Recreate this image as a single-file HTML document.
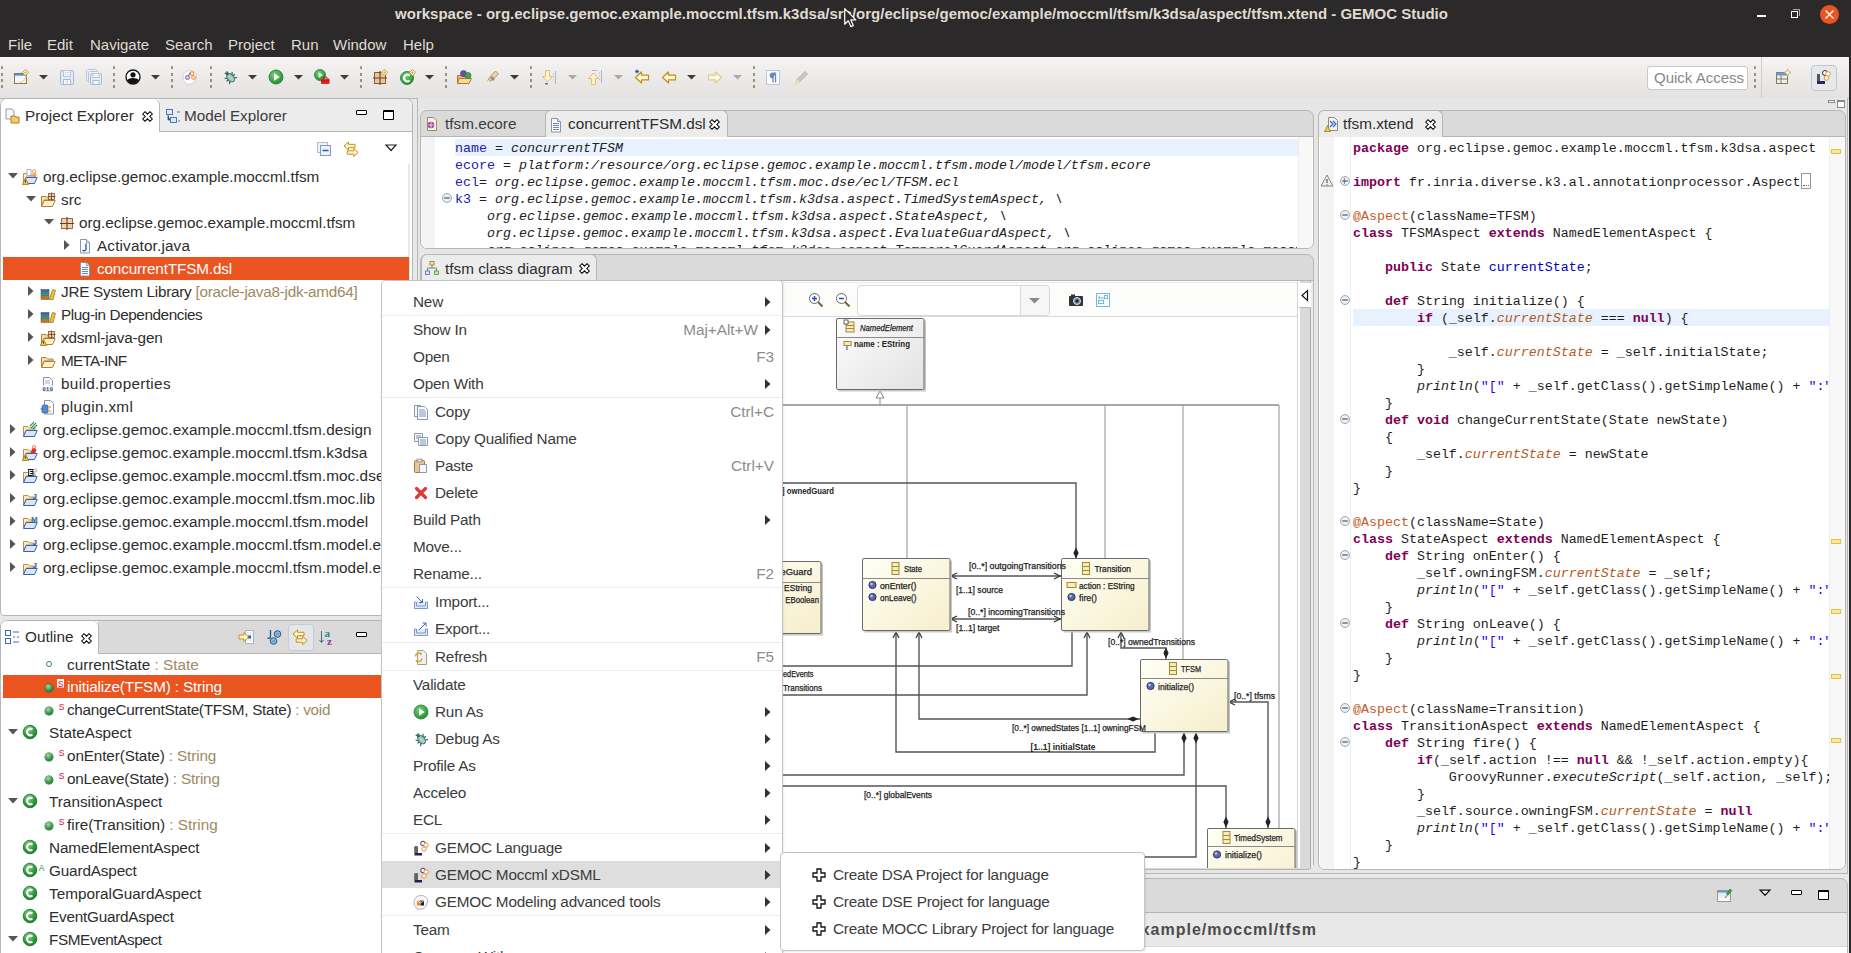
<!DOCTYPE html><html><head><meta charset="utf-8"><style>
*{margin:0;padding:0;box-sizing:border-box}
html,body{width:1851px;height:953px;overflow:hidden;background:#e8e8e7;font-family:"Liberation Sans",sans-serif;position:relative}
.a{position:absolute}
.t{position:absolute;line-height:24px;white-space:pre;font-family:"Liberation Sans",sans-serif}
.m{position:absolute;white-space:pre;font-family:"Liberation Mono",monospace}
svg{position:absolute;overflow:visible}
</style></head><body>
<div class="a" style="left:0;top:0;width:1851px;height:57px;background:#2b2929"></div>
<div class="a" style="left:1849px;top:0;width:2px;height:953px;background:#2b2929"></div>
<div class="t" style="left:0;top:2px;width:1843px;text-align:center;font-size:15px;font-weight:bold;color:#dfdbd2">workspace - org.eclipse.gemoc.example.moccml.tfsm.k3dsa/src/org/eclipse/gemoc/example/moccml/tfsm/k3dsa/aspect/tfsm.xtend - GEMOC Studio</div>
<div class="a" style="left:1757px;top:15px;width:9px;height:2px;background:#fff"></div>
<div class="a" style="left:1791px;top:11px;width:7px;height:7px;border:1.5px solid #fff"></div><div class="a" style="left:1793px;top:9px;width:7px;height:7px;border-top:1px solid #aaa;border-right:1px solid #aaa"></div>
<div class="a" style="left:1820px;top:5px;width:19px;height:19px;border-radius:50%;background:#e95420"></div>
<svg style="left:1825px;top:10px" width="9" height="9"><path d="M0.5 0.5L8.5 8.5M8.5 0.5L0.5 8.5" stroke="#fff" stroke-width="1.3"/></svg>
<div class="t" style="left:8px;top:33px;font-size:15px;color:#dfdbd2">File</div>
<div class="t" style="left:47px;top:33px;font-size:15px;color:#dfdbd2">Edit</div>
<div class="t" style="left:90px;top:33px;font-size:15px;color:#dfdbd2">Navigate</div>
<div class="t" style="left:165px;top:33px;font-size:15px;color:#dfdbd2">Search</div>
<div class="t" style="left:228px;top:33px;font-size:15px;color:#dfdbd2">Project</div>
<div class="t" style="left:291px;top:33px;font-size:15px;color:#dfdbd2">Run</div>
<div class="t" style="left:333px;top:33px;font-size:15px;color:#dfdbd2">Window</div>
<div class="t" style="left:403px;top:33px;font-size:15px;color:#dfdbd2">Help</div>
<div class="a" style="left:0;top:57px;width:1849px;height:42px;background:linear-gradient(#f5f4f3,#e3e2e1);border-bottom:1px solid #b8b8b8"></div>
<div class="a" style="left:1px;top:66px;width:2px;height:24px;border-radius:1px;background:repeating-linear-gradient(transparent 0 0.5px,#9a927f 0.5px 3.5px,transparent 3.5px 6.2px)"></div>
<div class="a" style="left:113px;top:66px;width:2px;height:24px;border-radius:1px;background:repeating-linear-gradient(transparent 0 0.5px,#9a927f 0.5px 3.5px,transparent 3.5px 6.2px)"></div>
<div class="a" style="left:171px;top:66px;width:2px;height:24px;border-radius:1px;background:repeating-linear-gradient(transparent 0 0.5px,#9a927f 0.5px 3.5px,transparent 3.5px 6.2px)"></div>
<div class="a" style="left:210px;top:66px;width:2px;height:24px;border-radius:1px;background:repeating-linear-gradient(transparent 0 0.5px,#9a927f 0.5px 3.5px,transparent 3.5px 6.2px)"></div>
<div class="a" style="left:360px;top:66px;width:2px;height:24px;border-radius:1px;background:repeating-linear-gradient(transparent 0 0.5px,#9a927f 0.5px 3.5px,transparent 3.5px 6.2px)"></div>
<div class="a" style="left:445px;top:66px;width:2px;height:24px;border-radius:1px;background:repeating-linear-gradient(transparent 0 0.5px,#9a927f 0.5px 3.5px,transparent 3.5px 6.2px)"></div>
<div class="a" style="left:530px;top:66px;width:2px;height:24px;border-radius:1px;background:repeating-linear-gradient(transparent 0 0.5px,#9a927f 0.5px 3.5px,transparent 3.5px 6.2px)"></div>
<div class="a" style="left:753px;top:66px;width:2px;height:24px;border-radius:1px;background:repeating-linear-gradient(transparent 0 0.5px,#9a927f 0.5px 3.5px,transparent 3.5px 6.2px)"></div>
<svg style="left:39px;top:75px" width="10" height="5"><path d="M0 0H9L4.5 4.5Z" fill="#3c3c3c"/></svg>
<svg style="left:151px;top:75px" width="10" height="5"><path d="M0 0H9L4.5 4.5Z" fill="#3c3c3c"/></svg>
<svg style="left:248px;top:75px" width="10" height="5"><path d="M0 0H9L4.5 4.5Z" fill="#3c3c3c"/></svg>
<svg style="left:294px;top:75px" width="10" height="5"><path d="M0 0H9L4.5 4.5Z" fill="#3c3c3c"/></svg>
<svg style="left:340px;top:75px" width="10" height="5"><path d="M0 0H9L4.5 4.5Z" fill="#3c3c3c"/></svg>
<svg style="left:425px;top:75px" width="10" height="5"><path d="M0 0H9L4.5 4.5Z" fill="#3c3c3c"/></svg>
<svg style="left:510px;top:75px" width="10" height="5"><path d="M0 0H9L4.5 4.5Z" fill="#3c3c3c"/></svg>
<svg style="left:687px;top:75px" width="10" height="5"><path d="M0 0H9L4.5 4.5Z" fill="#3c3c3c"/></svg>
<svg style="left:568px;top:75px" width="10" height="5"><path d="M0 0H9L4.5 4.5Z" fill="#aaa"/></svg>
<svg style="left:614px;top:75px" width="10" height="5"><path d="M0 0H9L4.5 4.5Z" fill="#aaa"/></svg>
<svg style="left:733px;top:75px" width="10" height="5"><path d="M0 0H9L4.5 4.5Z" fill="#aaa"/></svg>
<svg style="left:13px;top:69px" width="16" height="16" viewBox="0 0 16 16"><rect x="1.5" y="4.5" width="12" height="10" fill="#f2f6fb" stroke="#8a7a50"/><rect x="2" y="5" width="11" height="1.6" fill="#4a90d8"/><path d="M5 14c5-.5 7.5-3 8-7" stroke="#f0d890" fill="none" stroke-width="1.2"/><path d="M12.5 0.3l3.2 3.2-3.2 3.2-3.2-3.2z" fill="#fff8e0" stroke="#c09a30" stroke-width=".9"/><path d="M12.5 1.8v3.4M10.8 3.5h3.4" stroke="#d4b050" stroke-width=".8"/></svg>
<svg style="left:59px;top:69px" width="16" height="16" viewBox="0 0 16 16"><rect x="1.5" y="1.5" width="13" height="14" rx="1.5" fill="#e4ebf5" stroke="#a8b8d8"/><rect x="4.5" y="1.5" width="7" height="6" fill="#f6f6f6" stroke="#b8c4d8"/><path d="M5.5 3.5h5M5.5 5.5h5" stroke="#c8d0dc" stroke-width=".6"/><rect x="4.5" y="10.5" width="7" height="5" fill="#f8fafc" stroke="#a8b8d8"/><path d="M8 11.5v3" stroke="#a8b8d8"/></svg>
<svg style="left:86px;top:69px" width="16" height="16" viewBox="0 0 16 16"><rect x="0.5" y="0.5" width="10" height="11" rx="1" fill="#eef2f8" stroke="#b8c4d8"/><rect x="2.5" y="2.5" width="10" height="11" rx="1" fill="#eef2f8" stroke="#b8c4d8"/><rect x="4.5" y="4.5" width="11" height="11" rx="1.2" fill="#e4ebf5" stroke="#a8b8d8"/><rect x="7" y="4.5" width="6" height="4" fill="#f6f6f6" stroke="#b8c4d8"/><rect x="7" y="11.5" width="6" height="4" fill="#f8fafc" stroke="#a8b8d8"/></svg>
<svg style="left:125px;top:69px" width="16" height="16" viewBox="0 0 16 16"><circle cx="8" cy="8" r="7" fill="#fff" stroke="#111" stroke-width="1.3"/><circle cx="8" cy="5.8" r="2.6" fill="#111"/><path d="M2.3 11.2C4 8.3 12 8.3 13.7 11.2 12.5 13.5 10.5 14.8 8 14.8S3.5 13.5 2.3 11.2z" fill="#111"/></svg>
<svg style="left:182px;top:69px" width="16" height="16" viewBox="0 0 16 16"><path d="M4.5 15.5c-.5-2-3.5-3-3.5-6.5C1 4 4 1.5 8 1.5s7 2.5 6.5 6.5c-.3 2-1.5 2.5-1.5 4l-2 2.5z" fill="#fbfbfd" stroke="#c8c8d8" stroke-width=".8"/><circle cx="5.5" cy="8.5" r="1.8" fill="none" stroke="#6a5aa0" stroke-width="1.1"/><path d="M6.5 7l1.5-3.5" stroke="#6a5aa0"/><circle cx="10" cy="4.5" r="1.8" fill="none" stroke="#f08a30" stroke-width="1.1"/><circle cx="11.5" cy="8.5" r="1.8" fill="none" stroke="#f08a30" stroke-width="1.1"/></svg>
<svg style="left:222px;top:69px" width="16" height="16" viewBox="0 0 16 16"><g transform="rotate(-40 8 8)"><ellipse cx="8" cy="9" rx="3.2" ry="4.6" fill="#9ccab0" stroke="#2e6a6a"/><path d="M8 5.5v7" stroke="#cfe8d8" stroke-width=".8"/><circle cx="8" cy="3.8" r="1.6" fill="#2e6a6a"/><path d="M3 5.5l2 2M13 5.5l-2 2M2.5 9h2.3M13.5 9h-2.3M3 13l2-1.5M13 13l-2-1.5M6.5 1.5l.8 1.5M9.5 1.5l-.8 1.5" stroke="#2e5a6a" stroke-width="1.1"/></g></svg>
<svg style="left:268px;top:69px" width="16" height="16" viewBox="0 0 16 16"><defs><radialGradient id="rg" cx=".4" cy=".35" r=".7"><stop offset="0" stop-color="#7cd07c"/><stop offset="1" stop-color="#1e8a2e"/></radialGradient></defs><circle cx="8" cy="8" r="7" fill="url(#rg)" stroke="#1e7a2e" stroke-width=".8"/><path d="M6 4.2v7.6l5.8-3.8z" fill="#fff"/></svg>
<svg style="left:314px;top:69px" width="16" height="16" viewBox="0 0 16 16"><circle cx="6" cy="6" r="5.5" fill="url(#rg)" stroke="#1e7a2e" stroke-width=".8"/><path d="M4.6 3.3v5.4l4.2-2.7z" fill="#fff"/><rect x="7" y="9.5" width="8.5" height="5.5" rx=".8" fill="#e02828"/><path d="M9.5 9.5v-1.3h3.5v1.3M7 12h8.5" stroke="#a01010" stroke-width=".8" fill="none"/></svg>
<svg style="left:372px;top:69px" width="16" height="16" viewBox="0 0 16 16"><rect x="2.5" y="3.5" width="11" height="11" fill="#e8c898" stroke="#8a5a3a"/><path d="M8 2v14M1 9h14" stroke="#6a3a2a" stroke-width="1.1"/><path d="M12.5 0.3l3.2 3.2-3.2 3.2-3.2-3.2z" fill="#fff8e0" stroke="#c09a30" stroke-width=".9"/><path d="M12.5 1.8v3.4M10.8 3.5h3.4" stroke="#d4b050" stroke-width=".8"/></svg>
<svg style="left:400px;top:69px" width="16" height="16" viewBox="0 0 16 16"><circle cx="7" cy="9" r="6.5" fill="url(#rg)" stroke="#1e7a2e" stroke-width=".8"/><path d="M9.6 6.6a3.3 3.3 0 1 0 0 4.8" stroke="#fff" stroke-width="2" fill="none"/><path d="M12.5 0.3l3.2 3.2-3.2 3.2-3.2-3.2z" fill="#fff8e0" stroke="#c09a30" stroke-width=".9"/><path d="M12.5 1.8v3.4M10.8 3.5h3.4" stroke="#d4b050" stroke-width=".8"/></svg>
<svg style="left:456px;top:69px" width="16" height="16" viewBox="0 0 16 16"><path d="M1.5 6.5h4l1 1h6v6.5h-11z" fill="#e8b868" stroke="#a87030" stroke-width=".9"/><path d="M3 9.5h12.5l-2.5 5H1.5z" fill="#fcd890" stroke="#a87030" stroke-width=".9"/><circle cx="7.5" cy="4.5" r="3" fill="#6a50b0" stroke="#40307a" stroke-width=".6"/><circle cx="12" cy="6.5" r="3" fill="#3aaa50" stroke="#20703a" stroke-width=".6"/></svg>
<svg style="left:484px;top:69px" width="16" height="16" viewBox="0 0 16 16"><path d="M3 13.5l2.5-5 6-6.5 3 3-6.5 6z" fill="#e8d8a8" stroke="#b08a40" stroke-width=".9"/><path d="M6 9l3 3 2-2-3-3z" fill="#909090"/><path d="M1 15.5l2.5-2.5 1 1z" fill="#fff" stroke="#eee"/><path d="M2 15l2-4 2 2z" fill="#f8f0d0"/></svg>
<svg style="left:541px;top:69px" width="16" height="16" viewBox="0 0 16 16"><path d="M4.5 1.5h4v6h3l-5 5.5-5-5.5h3z" fill="#fdf2d0" stroke="#e0c070"/><path d="M14.5 2v13M12 5h1M12 8h1M12 11h1" stroke="#a8b8d0"/><rect x="4" y="14" width="3" height="1.5" fill="#5a7ab0"/></svg>
<svg style="left:587px;top:69px" width="16" height="16" viewBox="0 0 16 16"><path d="M4.5 15.5h4v-6h3l-5-5.5-5 5.5h3z" fill="#fdf2d0" stroke="#e0c070"/><path d="M14.5 1v13M12 4h1M12 7h1M12 10h1M5 1.5h5" stroke="#a8b8d0"/></svg>
<svg style="left:634px;top:69px" width="16" height="16" viewBox="0 0 16 16"><path d="M1.5 8.5l6-5.5v3.2h7v4.6h-7V14z" fill="#fff6da" stroke="#c88a18" stroke-width="1.2" stroke-linejoin="round"/><path d="M3 0.5v4M1 2.5h4M1.6 1.1l2.8 2.8M4.4 1.1L1.6 3.9" stroke="#2a4a90" stroke-width=".8"/></svg>
<svg style="left:661px;top:69px" width="16" height="16" viewBox="0 0 16 16"><path d="M1.5 8.5l6-5.5v3.2h7v4.6h-7V14z" fill="#fff6da" stroke="#c88a18" stroke-width="1.2" stroke-linejoin="round"/></svg>
<svg style="left:707px;top:69px" width="16" height="16" viewBox="0 0 16 16"><path d="M14.5 8.5l-6-5.5v3.2h-7v4.6h7V14z" fill="#fffaf0" stroke="#e0c890" stroke-width="1.2" stroke-linejoin="round"/></svg>
<svg style="left:765px;top:69px" width="16" height="16" viewBox="0 0 16 16"><rect x="1.5" y="1.5" width="13" height="14" fill="#f8fafc" stroke="#b8c8dc"/><path d="M8 4v9.5M10.5 4v9.5" stroke="#6a8ab8" stroke-width="1.3"/><path d="M11 4H7.5a2.5 2.5 0 0 0 0 5H8" fill="#6a8ab8" stroke="#6a8ab8"/></svg>
<svg style="left:793px;top:69px" width="16" height="16" viewBox="0 0 16 16"><path d="M2 14.5l2-4 8-8 2.5 2.5-8 8z" fill="#c8c8c8" stroke="#aaa" stroke-width=".8"/><path d="M1 15.5l3-5 2.5 2.5z" fill="#f4e8a0"/><path d="M0 15.5h5" stroke="#f4e8a0"/></svg>
<div class="a" style="left:1647px;top:66px;width:101px;height:24px;background:#fff;border:1px solid #c9c9c9;border-radius:3px"></div>
<div class="t" style="left:1654px;top:66px;font-size:15px;color:#888">Quick Access</div>
<div class="a" style="left:1754px;top:66px;width:2px;height:24px;border-radius:1px;background:repeating-linear-gradient(transparent 0 0.5px,#9a927f 0.5px 3.5px,transparent 3.5px 6.2px)"></div>
<div class="a" style="left:1761px;top:57px;width:1px;height:41px;background:#cfcfcf"></div>
<svg style="left:1775px;top:69px" width="16" height="16" viewBox="0 0 16 16"><rect x="1.5" y="3.5" width="11" height="11" fill="#e8f0f8" stroke="#8a7a4a"/><rect x="1.5" y="3.5" width="11" height="3" fill="#6a9ad0"/><path d="M6 6.5v8M1.5 10h11" stroke="#8a7a4a"/><path d="M12.5 0l1 2.5 2.5 1-2.5 1-1 2.5-1-2.5-2.5-1 2.5-1z" fill="#fff" stroke="#c8a040" stroke-width=".8"/></svg>
<div class="a" style="left:1811px;top:65px;width:26px;height:26px;border:1px solid #c0c8d4;border-radius:4px;background:#e6e8ea"></div>
<svg style="left:1816px;top:69px" width="16" height="16" viewBox="0 0 16 16"><path d="M1 15h8v-3H4V5H1z" fill="#2a2a5a"/><rect x="1" y="5" width="3" height="7" fill="#555"/><circle cx="9" cy="4" r="2.5" fill="#fff" stroke="#2a2a5a"/><circle cx="12" cy="5" r="2.3" fill="#fff" stroke="#f09030"/><circle cx="10.5" cy="9" r="2.3" fill="#fff" stroke="#f09030"/></svg>
<div class="a" style="left:0;top:98px;width:413px;height:518px;border:1px solid #b6b6b6;border-radius:7px 7px 4px 4px;background:#fff;overflow:hidden"><div class="a" style="left:158px;top:0;width:260px;height:33px;background:#ececec;border-bottom:1px solid #b6b6b6;border-radius:0 0 0 0"></div></div>
<div class="a" style="left:1px;top:99px;width:159px;height:33px;background:#fff;border-radius:6px 6px 0 0;border-right:1px solid #b6b6b6"></div>
<div class="t" style="left:25px;top:104px;font-size:15.3px;color:#2d2d2d">Project Explorer</div>
<div class="t" style="left:184px;top:104px;font-size:15.3px;color:#3c3c3c">Model Explorer</div>
<svg style="left:142px;top:111px" width="11" height="11" viewBox="0 0 11 11"><path d="M0.7 3L3 0.7 5.5 3.2 8 0.7 10.3 3 7.8 5.5 10.3 8 8 10.3 5.5 7.8 3 10.3 0.7 8 3.2 5.5z" fill="#fff" stroke="#000" stroke-width="1.05" stroke-linejoin="miter"/></svg>
<div class="a" style="left:356px;top:110px;width:11px;height:5px;border:1.3px solid #000;background:#fff;border-radius:1px"></div>
<div class="a" style="left:383px;top:110px;width:11px;height:10px;border:1.3px solid #000;border-top-width:2.2px;background:#fff;border-radius:1px"></div>
<svg style="left:4px;top:108px" width="16" height="16" viewBox="0 0 16 16"><path d="M2 1h6l2 2v8H2z" fill="#f4f6fa" stroke="#99a"/><path d="M7 8h4l1 1h3v6H7z" fill="#f4cc60" stroke="#b0802a"/></svg>
<svg style="left:165px;top:108px" width="16" height="16" viewBox="0 0 16 16"><rect x="1.5" y="1.5" width="6" height="5" fill="#dde8f4" stroke="#4a7ab8"/><rect x="5.5" y="9.5" width="6" height="5" fill="#dde8f4" stroke="#4a7ab8"/><path d="M3 7v5h2M12 4h3M13 13h2" stroke="#4a7ab8"/></svg>
<svg style="left:316px;top:141px" width="16" height="16" viewBox="0 0 16 16"><rect x="1.5" y="1.5" width="10" height="10" fill="#eef3f9" stroke="#a9bdd8"/><rect x="4.5" y="4.5" width="10" height="10" fill="#eef3f9" stroke="#7a9ac8"/><path d="M6.5 9.5h6" stroke="#2a5aa8" stroke-width="1.5"/></svg>
<svg style="left:343px;top:141px" width="16" height="16" viewBox="0 0 16 16"><path d="M1 5l4.5-4v2.3H12v3.4H5.5V9z" fill="#fff2c8" stroke="#c8901e" stroke-linejoin="round"/><path d="M15.2 11.5l-4.5-4v2.3H4.2v3.4h6.5v2.3z" fill="#fff2c8" stroke="#c8901e" stroke-linejoin="round"/></svg>
<svg style="left:385px;top:144px" width="12" height="8"><path d="M1 1h10L6 6.5z" fill="#fff" stroke="#222" stroke-width="1.2"/></svg>
<div class="a" style="left:408px;top:164px;width:2px;height:450px;background:#e8e8e8"></div>
<div class="a" style="left:3px;top:257px;width:406px;height:23px;background:#e95420"></div>
<svg style="left:8px;top:173px" width="10" height="6"><path d="M0 0H10L5 5.5z" fill="#555"/></svg>
<svg style="left:22px;top:169px" width="16" height="16" viewBox="0 0 16 16"><path d="M1.5 4.5h4.5l1.5 1.5h5.5v2H4.2L1.5 14z" fill="#fbeac0" stroke="#b89048"/><path d="M1.5 14.5L4.2 8.5h11l-2.7 6z" fill="#d8e6fa" stroke="#3a62b0"/><path d="M3.5 9.5l3.2 6H.3z" fill="#f6c230" stroke="#906810" stroke-width=".7"/><path d="M3.5 11.5v2" stroke="#222" stroke-width=".8"/><rect x="5" y="0.5" width="4" height="6" fill="#fff" stroke="#888" stroke-width=".6"/><circle cx="12" cy="2.5" r="1.8" fill="none" stroke="#f08a30" stroke-width=".9"/><circle cx="12.5" cy="6" r="1.6" fill="none" stroke="#f08a30" stroke-width=".9"/></svg>
<div class="t" style="left:43px;top:165px;font-size:15.3px;color:#2d2d2d;letter-spacing:0px">org.eclipse.gemoc.example.moccml.tfsm</div>
<svg style="left:26px;top:196px" width="10" height="6"><path d="M0 0H10L5 5.5z" fill="#555"/></svg>
<svg style="left:40px;top:192px" width="16" height="16" viewBox="0 0 16 16"><path d="M1.5 4.5h4.5l1.5 1.5h5.5v2H4.2L1.5 14z" fill="#f8e0a8" stroke="#b08038"/><path d="M1.5 14.5L4.2 8.5h11l-2.7 6z" fill="#fdf2cc" stroke="#b08038"/><rect x="8.5" y="1.5" width="6" height="6" fill="#ead0a0" stroke="#8a5a3a" stroke-width=".8"/><path d="M11.5 0.5v8M7.5 4.5h8" stroke="#6a3a2a" stroke-width=".8"/></svg>
<div class="t" style="left:61px;top:188px;font-size:15.3px;color:#2d2d2d;letter-spacing:0px">src</div>
<svg style="left:44px;top:219px" width="10" height="6"><path d="M0 0H10L5 5.5z" fill="#555"/></svg>
<svg style="left:59px;top:215px" width="16" height="16" viewBox="0 0 16 16"><rect x="2.5" y="3.5" width="11" height="10" fill="#eed4a8" stroke="#9a6a4a"/><path d="M8 2v13M1 8.5h14" stroke="#6a3a2a" stroke-width="1.1"/></svg>
<div class="t" style="left:79px;top:211px;font-size:15.3px;color:#2d2d2d;letter-spacing:0px">org.eclipse.gemoc.example.moccml.tfsm</div>
<svg style="left:64px;top:240px" width="6" height="10"><path d="M0 0V10L5.5 5z" fill="#555"/></svg>
<svg style="left:77px;top:238px" width="16" height="16" viewBox="0 0 16 16"><path d="M3.5 1.5h6l3 3v10.5h-9z" fill="#fbfbfd" stroke="#8a94a8"/><path d="M9.5 1.5v3h3" fill="#e8ecf4" stroke="#8a94a8"/><path d="M9 5.5v5.5c0 2-2.5 2.2-3.5 1" stroke="#2a5ab0" fill="none" stroke-width="1.4"/></svg>
<div class="t" style="left:97px;top:234px;font-size:15.3px;color:#2d2d2d;letter-spacing:0.15px">Activator.java</div>
<svg style="left:77px;top:261px" width="16" height="16" viewBox="0 0 16 16"><path d="M3.5 1.5h6l3 3v10.5h-9z" fill="#fbfbfd" stroke="#8a94a8"/><path d="M9.5 1.5v3h3" fill="#e8ecf4" stroke="#8a94a8"/><path d="M5 6.5h6M5 8.5h6M5 10.5h6M5 12.5h6" stroke="#5a7ab8" stroke-width=".9"/></svg>
<div class="t" style="left:97px;top:257px;font-size:15.3px;color:#ffffff;letter-spacing:-0.15px">concurrentTFSM.dsl</div>
<svg style="left:28px;top:286px" width="6" height="10"><path d="M0 0V10L5.5 5z" fill="#555"/></svg>
<svg style="left:40px;top:284px" width="16" height="16" viewBox="0 0 16 16"><rect x="1" y="5.5" width="8" height="3" fill="#3a6a9a" stroke="#2a4a6a" stroke-width=".5"/><rect x="1" y="9" width="8" height="3" fill="#3a9a6a" stroke="#2a6a4a" stroke-width=".5"/><rect x="1" y="12.5" width="8" height="3" fill="#c8702a" stroke="#8a4a1a" stroke-width=".5"/><path d="M9.5 15.5l3-10 3 .8-2.5 9.2z" fill="#f4c040" stroke="#906810" stroke-width=".7"/></svg>
<div class="t" style="left:61px;top:280px;font-size:15.3px;color:#2d2d2d;letter-spacing:-0.26px">JRE System Library<span style="color:#a0895f"> [oracle-java8-jdk-amd64]</span></div>
<svg style="left:28px;top:309px" width="6" height="10"><path d="M0 0V10L5.5 5z" fill="#555"/></svg>
<svg style="left:40px;top:307px" width="16" height="16" viewBox="0 0 16 16"><rect x="1" y="5.5" width="8" height="3" fill="#3a6a9a" stroke="#2a4a6a" stroke-width=".5"/><rect x="1" y="9" width="8" height="3" fill="#3a9a6a" stroke="#2a6a4a" stroke-width=".5"/><rect x="1" y="12.5" width="8" height="3" fill="#c8702a" stroke="#8a4a1a" stroke-width=".5"/><path d="M9.5 15.5l3-10 3 .8-2.5 9.2z" fill="#f4c040" stroke="#906810" stroke-width=".7"/></svg>
<div class="t" style="left:61px;top:303px;font-size:15.3px;color:#2d2d2d;letter-spacing:-0.42px">Plug-in Dependencies</div>
<svg style="left:28px;top:332px" width="6" height="10"><path d="M0 0V10L5.5 5z" fill="#555"/></svg>
<svg style="left:40px;top:330px" width="16" height="16" viewBox="0 0 16 16"><path d="M1.5 4.5h4.5l1.5 1.5h5.5v2H4.2L1.5 14z" fill="#f8e0a8" stroke="#b08038"/><path d="M1.5 14.5L4.2 8.5h11l-2.7 6z" fill="#fdf2cc" stroke="#b08038"/><rect x="8.5" y="1.5" width="6" height="6" fill="#ead0a0" stroke="#8a5a3a" stroke-width=".8"/><path d="M11.5 0.5v8M7.5 4.5h8" stroke="#6a3a2a" stroke-width=".8"/><path d="M3.5 9.5l3.2 6H.3z" fill="#f6c230" stroke="#906810" stroke-width=".7"/><path d="M3.5 11.5v2" stroke="#222" stroke-width=".8"/></svg>
<div class="t" style="left:61px;top:326px;font-size:15.3px;color:#2d2d2d;letter-spacing:-0.15px">xdsml-java-gen</div>
<svg style="left:28px;top:355px" width="6" height="10"><path d="M0 0V10L5.5 5z" fill="#555"/></svg>
<svg style="left:40px;top:353px" width="16" height="16" viewBox="0 0 16 16"><path d="M1.5 4.5h4.5l1.5 1.5h5.5v2H4.2L1.5 14z" fill="#f8e0a8" stroke="#b08038"/><path d="M1.5 14.5L4.2 8.5h11l-2.7 6z" fill="#fdf2cc" stroke="#b08038"/></svg>
<div class="t" style="left:61px;top:349px;font-size:15.3px;color:#2d2d2d;letter-spacing:-0.7px">META-INF</div>
<svg style="left:40px;top:376px" width="16" height="16" viewBox="0 0 16 16"><path d="M3.5 1.5h6l3 3v10.5h-9z" fill="#fbfbfd" stroke="#8a94a8"/><path d="M5 5h5M5 7h5" stroke="#8a9ab8" stroke-width=".7"/><rect x="2" y="9.5" width="12" height="6" fill="#fff"/><text x="2.2" y="15" font-size="6" fill="#2a4a8a" font-family="Liberation Mono" font-weight="bold">010</text></svg>
<div class="t" style="left:61px;top:372px;font-size:15.3px;color:#2d2d2d;letter-spacing:0.33px">build.properties</div>
<svg style="left:40px;top:399px" width="16" height="16" viewBox="0 0 16 16"><path d="M4.5 1.5h6l3 3v10.5h-9z" fill="#fbfbfd" stroke="#8a94a8"/><rect x="2" y="6" width="6" height="8" rx="1.5" fill="#5a8ad0" stroke="#2a5aa0" stroke-width=".7"/><path d="M8 8h3M8 12h3" stroke="#e8b030" stroke-width="1.3"/><path d="M0.5 10h2" stroke="#2a5aa0"/></svg>
<div class="t" style="left:61px;top:395px;font-size:15.3px;color:#2d2d2d;letter-spacing:0.33px">plugin.xml</div>
<svg style="left:10px;top:424px" width="6" height="10"><path d="M0 0V10L5.5 5z" fill="#555"/></svg>
<svg style="left:22px;top:422px" width="16" height="16" viewBox="0 0 16 16"><path d="M1.5 4.5h4.5l1.5 1.5h5.5v2H4.2L1.5 14z" fill="#fbeac0" stroke="#b89048"/><path d="M1.5 14.5L4.2 8.5h11l-2.7 6z" fill="#d8e6fa" stroke="#3a62b0"/><path d="M9 6l5-5M11 7l4-4M8 4l4-4" stroke="#2a9a6a" stroke-width="1.1"/></svg>
<div class="t" style="left:43px;top:418px;font-size:15.3px;color:#2d2d2d;letter-spacing:0.07px">org.eclipse.gemoc.example.moccml.tfsm.design</div>
<svg style="left:10px;top:447px" width="6" height="10"><path d="M0 0V10L5.5 5z" fill="#555"/></svg>
<svg style="left:22px;top:445px" width="16" height="16" viewBox="0 0 16 16"><path d="M1.5 4.5h4.5l1.5 1.5h5.5v2H4.2L1.5 14z" fill="#fbeac0" stroke="#b89048"/><path d="M1.5 14.5L4.2 8.5h11l-2.7 6z" fill="#d8e6fa" stroke="#3a62b0"/><path d="M3.5 9.5l3.2 6H.3z" fill="#f6c230" stroke="#906810" stroke-width=".7"/><path d="M3.5 11.5v2" stroke="#222" stroke-width=".8"/><path d="M8.5 8l3-7 3 4-2 4z" fill="#e03020"/><circle cx="12" cy="2" r="1.5" fill="#fff" stroke="#e03020" stroke-width=".6"/></svg>
<div class="t" style="left:43px;top:441px;font-size:15.3px;color:#2d2d2d;letter-spacing:0.07px">org.eclipse.gemoc.example.moccml.tfsm.k3dsa</div>
<svg style="left:10px;top:470px" width="6" height="10"><path d="M0 0V10L5.5 5z" fill="#555"/></svg>
<svg style="left:22px;top:468px" width="16" height="16" viewBox="0 0 16 16"><path d="M1.5 4.5h4.5l1.5 1.5h5.5v2H4.2L1.5 14z" fill="#fbeac0" stroke="#b89048"/><path d="M1.5 14.5L4.2 8.5h11l-2.7 6z" fill="#d8e6fa" stroke="#3a62b0"/><rect x="6" y="1" width="5.5" height="7" fill="#111"/><text x="6.6" y="7" font-size="6.5" fill="#fff" font-family="Liberation Sans" font-weight="bold">E</text><circle cx="13" cy="2.5" r="1.6" fill="#fff" stroke="#6a8ab8" stroke-width=".7"/><path d="M12 5l-1 3" stroke="#6a8ab8"/></svg>
<div class="t" style="left:43px;top:464px;font-size:15.3px;color:#2d2d2d;letter-spacing:0.07px">org.eclipse.gemoc.example.moccml.tfsm.moc.dse</div>
<svg style="left:10px;top:493px" width="6" height="10"><path d="M0 0V10L5.5 5z" fill="#555"/></svg>
<svg style="left:22px;top:491px" width="16" height="16" viewBox="0 0 16 16"><path d="M1.5 4.5h4.5l1.5 1.5h5.5v2H4.2L1.5 14z" fill="#fbeac0" stroke="#b89048"/><path d="M1.5 14.5L4.2 8.5h11l-2.7 6z" fill="#d8e6fa" stroke="#3a62b0"/><text x="10.5" y="7.5" font-size="8" fill="#2a5ab0" font-family="Liberation Sans" font-weight="bold">J</text></svg>
<div class="t" style="left:43px;top:487px;font-size:15.3px;color:#2d2d2d;letter-spacing:0.07px">org.eclipse.gemoc.example.moccml.tfsm.moc.lib</div>
<svg style="left:10px;top:516px" width="6" height="10"><path d="M0 0V10L5.5 5z" fill="#555"/></svg>
<svg style="left:22px;top:514px" width="16" height="16" viewBox="0 0 16 16"><path d="M1.5 4.5h4.5l1.5 1.5h5.5v2H4.2L1.5 14z" fill="#fbeac0" stroke="#b89048"/><path d="M1.5 14.5L4.2 8.5h11l-2.7 6z" fill="#d8e6fa" stroke="#3a62b0"/><text x="9" y="7.5" font-size="8" fill="#2a7a9a" font-family="Liberation Sans" font-weight="bold">M</text></svg>
<div class="t" style="left:43px;top:510px;font-size:15.3px;color:#2d2d2d;letter-spacing:0.07px">org.eclipse.gemoc.example.moccml.tfsm.model</div>
<svg style="left:10px;top:539px" width="6" height="10"><path d="M0 0V10L5.5 5z" fill="#555"/></svg>
<svg style="left:22px;top:537px" width="16" height="16" viewBox="0 0 16 16"><path d="M1.5 4.5h4.5l1.5 1.5h5.5v2H4.2L1.5 14z" fill="#fbeac0" stroke="#b89048"/><path d="M1.5 14.5L4.2 8.5h11l-2.7 6z" fill="#d8e6fa" stroke="#3a62b0"/><text x="10.5" y="7.5" font-size="8" fill="#2a5ab0" font-family="Liberation Sans" font-weight="bold">J</text></svg>
<div class="t" style="left:43px;top:533px;font-size:15.3px;color:#2d2d2d;letter-spacing:0.07px">org.eclipse.gemoc.example.moccml.tfsm.model.e</div>
<svg style="left:10px;top:562px" width="6" height="10"><path d="M0 0V10L5.5 5z" fill="#555"/></svg>
<svg style="left:22px;top:560px" width="16" height="16" viewBox="0 0 16 16"><path d="M1.5 4.5h4.5l1.5 1.5h5.5v2H4.2L1.5 14z" fill="#fbeac0" stroke="#b89048"/><path d="M1.5 14.5L4.2 8.5h11l-2.7 6z" fill="#d8e6fa" stroke="#3a62b0"/><text x="10.5" y="7.5" font-size="8" fill="#2a5ab0" font-family="Liberation Sans" font-weight="bold">J</text></svg>
<div class="t" style="left:43px;top:556px;font-size:15.3px;color:#2d2d2d;letter-spacing:0.07px">org.eclipse.gemoc.example.moccml.tfsm.model.e</div>
<div class="a" style="left:0;top:620px;width:413px;height:340px;border:1px solid #b6b6b6;border-radius:7px 7px 0 0;background:#fff;overflow:hidden"><div class="a" style="left:97px;top:0;width:320px;height:33px;background:#dadada;border-bottom:1px solid #b6b6b6"></div></div>
<div class="a" style="left:1px;top:621px;width:98px;height:33px;background:#fff;border-radius:6px 6px 0 0;border-right:1px solid #b6b6b6"></div>
<svg style="left:4px;top:629px" width="16" height="16" viewBox="0 0 16 16"><rect x="1.5" y="1.5" width="5" height="5" fill="#fff" stroke="#3a6ab0"/><rect x="1.5" y="9.5" width="5" height="5" fill="#fff" stroke="#3a6ab0"/><path d="M9 3h6M9 8h2M13 8h2M9 13h6" stroke="#3a6ab0"/></svg>
<div class="t" style="left:25px;top:625px;font-size:15.3px;color:#2d2d2d">Outline</div>
<svg style="left:81px;top:633px" width="11" height="11" viewBox="0 0 11 11"><path d="M0.7 3L3 0.7 5.5 3.2 8 0.7 10.3 3 7.8 5.5 10.3 8 8 10.3 5.5 7.8 3 10.3 0.7 8 3.2 5.5z" fill="#fff" stroke="#000" stroke-width="1.05" stroke-linejoin="miter"/></svg>
<div class="a" style="left:288px;top:624px;width:26px;height:27px;border:1px solid #c4ccd6;border-radius:4px;background:#e4e6e8"></div>
<svg style="left:238px;top:629px" width="16" height="16" viewBox="0 0 16 16"><rect x="7.5" y="1.5" width="8" height="13" fill="#f8fafc" stroke="#a8b4c8"/><path d="M9 4h5M9 11h5" stroke="#b8c4d4" stroke-width=".8" stroke-dasharray="1.5 1"/><rect x="10" y="6.5" width="3" height="3" fill="#2a5a9a"/><path d="M1 6h5V3.5L10.5 8 6 12.5V10H1z" fill="#fff2c8" stroke="#c8901e" stroke-linejoin="round"/></svg>
<svg style="left:266px;top:629px" width="16" height="16" viewBox="0 0 16 16"><path d="M4.5 1v6.5c0 2-2 2.2-3 1.2" stroke="#2a5aa0" fill="none" stroke-width="1.4"/><circle cx="11.5" cy="5" r="3.3" fill="#8ab8d8" stroke="#2a5a8a"/><path d="M10 5h3" stroke="#5a8ab0"/><circle cx="7.5" cy="12" r="3.3" fill="#8ab8d8" stroke="#2a5a8a"/><path d="M6 12h3" stroke="#5a8ab0"/></svg>
<svg style="left:292px;top:629px" width="16" height="16" viewBox="0 0 16 16"><path d="M1 5l4.5-4v2.3H12v3.4H5.5V9z" fill="#fff2c8" stroke="#c8901e" stroke-linejoin="round"/><path d="M15.2 11.5l-4.5-4v2.3H4.2v3.4h6.5v2.3z" fill="#fff2c8" stroke="#c8901e" stroke-linejoin="round"/></svg>
<svg style="left:319px;top:629px" width="16" height="16" viewBox="0 0 16 16"><path d="M2.5 2v11.5M0.5 11l2 2.5 2-2.5" stroke="#4a6a8a" fill="none" stroke-width="1"/><text x="5.5" y="8" font-size="11" fill="#2a8a7a" font-weight="bold" font-family="Liberation Serif">a</text><text x="8" y="16" font-size="11" fill="#8a3aa0" font-weight="bold" font-family="Liberation Serif">z</text></svg>
<div class="a" style="left:356px;top:632px;width:11px;height:5px;border:1.3px solid #000;background:#fff;border-radius:1px"></div>
<div class="a" style="left:3px;top:675px;width:380px;height:23px;background:#e95420"></div>
<div class="a" style="left:46px;top:661px;width:6px;height:6px;border-radius:50%;border:1.5px solid #3a8a4a;background:#fff"></div>
<div class="t" style="left:67px;top:653px;font-size:15.3px;color:#2d2d2d;letter-spacing:0px">currentState<span style="color:#a0895f"> : State</span></div>
<div class="a" style="left:45px;top:684px;width:8px;height:8px;border-radius:50%;background:radial-gradient(circle at 40% 30%,#a8d8a8,#2e8a3e 60%,#1e6a2e);box-shadow:0 0 0 .5px #1e6a2e"></div>
<svg style="left:57px;top:679px" width="8" height="9" viewBox="0 0 8 9"><rect x="0" y="0" width="7" height="8.5" fill="#fff"/><text x="3.5" y="7.6" text-anchor="middle" font-size="8.6" fill="#d01038" font-family="Liberation Sans" transform="scale(1 1)">S</text></svg>
<div class="t" style="left:67px;top:675px;font-size:15.3px;color:#fff;letter-spacing:-0.16px">initialize(TFSM) : String</div>
<div class="a" style="left:45px;top:707px;width:8px;height:8px;border-radius:50%;background:radial-gradient(circle at 40% 30%,#a8d8a8,#2e8a3e 60%,#1e6a2e);box-shadow:0 0 0 .5px #1e6a2e"></div>
<svg style="left:58px;top:702px" width="8" height="9" viewBox="0 0 8 9"><text x="3.5" y="7.6" text-anchor="middle" font-size="8.6" fill="#d01038" font-family="Liberation Sans" transform="scale(1 1)">S</text></svg>
<div class="t" style="left:67px;top:698px;font-size:15.3px;color:#2d2d2d;letter-spacing:-0.28px">changeCurrentState(TFSM, State)<span style="color:#a0895f"> : void</span></div>
<svg style="left:8px;top:729px" width="10" height="6"><path d="M0 0H10L5 5.5z" fill="#555"/></svg>
<svg style="left:22px;top:724px" width="16" height="16" viewBox="0 0 16 16"><defs><radialGradient id="cg" cx=".4" cy=".3" r=".75"><stop offset="0" stop-color="#8ad88a"/><stop offset=".6" stop-color="#2e9a3e"/><stop offset="1" stop-color="#1e7a2e"/></radialGradient></defs><circle cx="8" cy="8" r="6.8" fill="url(#cg)" stroke="#1e6a2a" stroke-width=".8"/><path d="M10.4 5.6a3.2 3.2 0 1 0 0 4.8" stroke="#fff" stroke-width="2" fill="none"/></svg>
<div class="t" style="left:49px;top:721px;font-size:15.3px;color:#2d2d2d;letter-spacing:0px">StateAspect</div>
<div class="a" style="left:45px;top:753px;width:8px;height:8px;border-radius:50%;background:radial-gradient(circle at 40% 30%,#a8d8a8,#2e8a3e 60%,#1e6a2e);box-shadow:0 0 0 .5px #1e6a2e"></div>
<svg style="left:58px;top:748px" width="8" height="9" viewBox="0 0 8 9"><text x="3.5" y="7.6" text-anchor="middle" font-size="8.6" fill="#d01038" font-family="Liberation Sans" transform="scale(1 1)">S</text></svg>
<div class="t" style="left:67px;top:744px;font-size:15.3px;color:#2d2d2d;letter-spacing:-0.13px">onEnter(State)<span style="color:#a0895f"> : String</span></div>
<div class="a" style="left:45px;top:776px;width:8px;height:8px;border-radius:50%;background:radial-gradient(circle at 40% 30%,#a8d8a8,#2e8a3e 60%,#1e6a2e);box-shadow:0 0 0 .5px #1e6a2e"></div>
<svg style="left:58px;top:771px" width="8" height="9" viewBox="0 0 8 9"><text x="3.5" y="7.6" text-anchor="middle" font-size="8.6" fill="#d01038" font-family="Liberation Sans" transform="scale(1 1)">S</text></svg>
<div class="t" style="left:67px;top:767px;font-size:15.3px;color:#2d2d2d;letter-spacing:-0.2px">onLeave(State)<span style="color:#a0895f"> : String</span></div>
<svg style="left:8px;top:798px" width="10" height="6"><path d="M0 0H10L5 5.5z" fill="#555"/></svg>
<svg style="left:22px;top:793px" width="16" height="16" viewBox="0 0 16 16"><defs><radialGradient id="cg" cx=".4" cy=".3" r=".75"><stop offset="0" stop-color="#8ad88a"/><stop offset=".6" stop-color="#2e9a3e"/><stop offset="1" stop-color="#1e7a2e"/></radialGradient></defs><circle cx="8" cy="8" r="6.8" fill="url(#cg)" stroke="#1e6a2a" stroke-width=".8"/><path d="M10.4 5.6a3.2 3.2 0 1 0 0 4.8" stroke="#fff" stroke-width="2" fill="none"/></svg>
<div class="t" style="left:49px;top:790px;font-size:15.3px;color:#2d2d2d;letter-spacing:0px">TransitionAspect</div>
<div class="a" style="left:45px;top:822px;width:8px;height:8px;border-radius:50%;background:radial-gradient(circle at 40% 30%,#a8d8a8,#2e8a3e 60%,#1e6a2e);box-shadow:0 0 0 .5px #1e6a2e"></div>
<svg style="left:58px;top:817px" width="8" height="9" viewBox="0 0 8 9"><text x="3.5" y="7.6" text-anchor="middle" font-size="8.6" fill="#d01038" font-family="Liberation Sans" transform="scale(1 1)">S</text></svg>
<div class="t" style="left:67px;top:813px;font-size:15.3px;color:#2d2d2d;letter-spacing:0px">fire(Transition)<span style="color:#a0895f"> : String</span></div>
<svg style="left:22px;top:839px" width="16" height="16" viewBox="0 0 16 16"><defs><radialGradient id="cg" cx=".4" cy=".3" r=".75"><stop offset="0" stop-color="#8ad88a"/><stop offset=".6" stop-color="#2e9a3e"/><stop offset="1" stop-color="#1e7a2e"/></radialGradient></defs><circle cx="8" cy="8" r="6.8" fill="url(#cg)" stroke="#1e6a2a" stroke-width=".8"/><path d="M10.4 5.6a3.2 3.2 0 1 0 0 4.8" stroke="#fff" stroke-width="2" fill="none"/></svg>
<div class="t" style="left:49px;top:836px;font-size:15.3px;color:#2d2d2d;letter-spacing:-0.1px">NamedElementAspect</div>
<svg style="left:22px;top:862px" width="16" height="16" viewBox="0 0 16 16"><defs><radialGradient id="cg" cx=".4" cy=".3" r=".75"><stop offset="0" stop-color="#8ad88a"/><stop offset=".6" stop-color="#2e9a3e"/><stop offset="1" stop-color="#1e7a2e"/></radialGradient></defs><circle cx="8" cy="8" r="6.8" fill="url(#cg)" stroke="#1e6a2a" stroke-width=".8"/><path d="M10.4 5.6a3.2 3.2 0 1 0 0 4.8" stroke="#fff" stroke-width="2" fill="none"/></svg>
<svg style="left:38px;top:863px" width="8" height="9" viewBox="0 0 8 9"><text x="3.5" y="7.6" text-anchor="middle" font-size="8.6" fill="#2a9a5a" font-family="Liberation Sans" transform="scale(1 1)">A</text></svg>
<div class="t" style="left:49px;top:859px;font-size:15.3px;color:#2d2d2d;letter-spacing:-0.15px">GuardAspect</div>
<svg style="left:22px;top:885px" width="16" height="16" viewBox="0 0 16 16"><defs><radialGradient id="cg" cx=".4" cy=".3" r=".75"><stop offset="0" stop-color="#8ad88a"/><stop offset=".6" stop-color="#2e9a3e"/><stop offset="1" stop-color="#1e7a2e"/></radialGradient></defs><circle cx="8" cy="8" r="6.8" fill="url(#cg)" stroke="#1e6a2a" stroke-width=".8"/><path d="M10.4 5.6a3.2 3.2 0 1 0 0 4.8" stroke="#fff" stroke-width="2" fill="none"/></svg>
<div class="t" style="left:49px;top:882px;font-size:15.3px;color:#2d2d2d;letter-spacing:0px">TemporalGuardAspect</div>
<svg style="left:22px;top:908px" width="16" height="16" viewBox="0 0 16 16"><defs><radialGradient id="cg" cx=".4" cy=".3" r=".75"><stop offset="0" stop-color="#8ad88a"/><stop offset=".6" stop-color="#2e9a3e"/><stop offset="1" stop-color="#1e7a2e"/></radialGradient></defs><circle cx="8" cy="8" r="6.8" fill="url(#cg)" stroke="#1e6a2a" stroke-width=".8"/><path d="M10.4 5.6a3.2 3.2 0 1 0 0 4.8" stroke="#fff" stroke-width="2" fill="none"/></svg>
<div class="t" style="left:49px;top:905px;font-size:15.3px;color:#2d2d2d;letter-spacing:-0.23px">EventGuardAspect</div>
<svg style="left:8px;top:936px" width="10" height="6"><path d="M0 0H10L5 5.5z" fill="#555"/></svg>
<svg style="left:22px;top:931px" width="16" height="16" viewBox="0 0 16 16"><defs><radialGradient id="cg" cx=".4" cy=".3" r=".75"><stop offset="0" stop-color="#8ad88a"/><stop offset=".6" stop-color="#2e9a3e"/><stop offset="1" stop-color="#1e7a2e"/></radialGradient></defs><circle cx="8" cy="8" r="6.8" fill="url(#cg)" stroke="#1e6a2a" stroke-width=".8"/><path d="M10.4 5.6a3.2 3.2 0 1 0 0 4.8" stroke="#fff" stroke-width="2" fill="none"/></svg>
<div class="t" style="left:49px;top:928px;font-size:15.3px;color:#2d2d2d;letter-spacing:-0.4px">FSMEventAspect</div>
<div class="a" style="left:417px;top:98px;width:1431px;height:776px;border:1px solid #b6b6b6;border-top:none;background:#e6e6e6"></div>
<div class="a" style="left:1828px;top:100px;width:7px;height:3px;border:1px solid #888;background:#fff"></div>
<div class="a" style="left:1837px;top:100px;width:8px;height:8px;border:1px solid #888;border-top-width:2px;background:#fff"></div>
<div class="a" style="left:420px;top:110px;width:894px;height:139px;border:1px solid #b6b6b6;border-radius:7px 7px 7px 7px;background:#dadada;overflow:hidden"></div>
<div class="a" style="left:421px;top:136px;width:892px;height:1px;background:#b6b6b6"></div>
<div class="a" style="left:545px;top:110px;width:183px;height:27px;border:1px solid #b6b6b6;border-bottom:none;border-radius:6px 6px 0 0;background:#ececec"></div>
<div class="a" style="left:544px;top:136px;width:1px;height:1px;background:#b6b6b6"></div>
<svg style="left:424px;top:116px" width="16" height="16" viewBox="0 0 16 16"><path d="M3.5 1.5h6l3 3v10h-9z" fill="#f8f0e0" stroke="#a08a60"/><circle cx="7" cy="9" r="3.3" fill="#a040a0"/><path d="M4 9h6M7 6v6" stroke="#f8e8f8" stroke-width=".8"/></svg>
<div class="t" style="left:445px;top:112px;font-size:15.3px;color:#3c3c3c">tfsm.ecore</div>
<svg style="left:548px;top:117px" width="16" height="16" viewBox="0 0 16 16"><path d="M3.5 1.5h6l3 3v10.5h-9z" fill="#fbfbfd" stroke="#8a94a8"/><path d="M9.5 1.5v3h3" fill="#e8ecf4" stroke="#8a94a8"/><path d="M5 6.5h6M5 8.5h6M5 10.5h6M5 12.5h6" stroke="#5a7ab8" stroke-width=".9"/></svg>
<div class="t" style="left:568px;top:112px;font-size:15.3px;color:#2d2d2d">concurrentTFSM.dsl</div>
<svg style="left:709px;top:119px" width="11" height="11" viewBox="0 0 11 11"><path d="M0.7 3L3 0.7 5.5 3.2 8 0.7 10.3 3 7.8 5.5 10.3 8 8 10.3 5.5 7.8 3 10.3 0.7 8 3.2 5.5z" fill="#fff" stroke="#000" stroke-width="1.05" stroke-linejoin="miter"/></svg>
<div class="a" style="left:421px;top:137px;width:892px;height:111px;background:#fff;border-radius:0 0 6px 6px;overflow:hidden"><div class="a" style="left:0;top:0;width:14px;height:111px;background:#f4f4f4"></div><div class="a" style="left:34px;top:2px;width:843px;height:17px;background:#e8f2fe"></div><div class="a" style="left:877px;top:0;width:14px;height:111px;background:#f8f8f8;border-left:1px solid #eee"></div></div>
<div class="a" style="left:455px;top:140px;width:842px;height:108px;overflow:hidden">
<div class="m" style="left:0;top:0px;font-size:13.33px;line-height:17px;color:#222"><span style="color:#2020b0">name</span> = <i>concurrentTFSM</i></div>
<div class="m" style="left:0;top:17px;font-size:13.33px;line-height:17px;color:#222"><span style="color:#2020b0">ecore</span> = <i>platform:/resource/org.eclipse.gemoc.example.moccml.tfsm.model/model/tfsm.ecore</i></div>
<div class="m" style="left:0;top:34px;font-size:13.33px;line-height:17px;color:#222"><span style="color:#2020b0">ecl</span>= <i>org.eclipse.gemoc.example.moccml.tfsm.moc.dse/ecl/TFSM.ecl</i></div>
<div class="m" style="left:0;top:51px;font-size:13.33px;line-height:17px;color:#222"><span style="color:#2020b0">k3</span> = <i>org.eclipse.gemoc.example.moccml.tfsm.k3dsa.aspect.TimedSystemAspect, \</i></div>
<div class="m" style="left:0;top:68px;font-size:13.33px;line-height:17px;color:#222">    <i>org.eclipse.gemoc.example.moccml.tfsm.k3dsa.aspect.StateAspect, \</i></div>
<div class="m" style="left:0;top:85px;font-size:13.33px;line-height:17px;color:#222">    <i>org.eclipse.gemoc.example.moccml.tfsm.k3dsa.aspect.EvaluateGuardAspect, \</i></div>
<div class="m" style="left:0;top:102px;font-size:13.33px;line-height:17px;color:#222">    <i>org.eclipse.gemoc.example.moccml.tfsm.k3dsa.aspect.TemporalGuardAspect,org.eclipse.gemoc.example.moccml.tfsm.k3dsa.aspect.EventGuardAspect</i></div>
</div>
<svg style="left:442px;top:193px" width="10" height="10" viewBox="0 0 9 9"><circle cx="4.5" cy="4.5" r="4" fill="#eef2f6" stroke="#8a9aaa" stroke-width=".8"/><path d="M2 4.5h5" stroke="#3a4a5a"/></svg>
<div class="a" style="left:420px;top:254px;width:894px;height:616px;border:1px solid #b6b6b6;border-radius:7px 7px 7px 7px;background:#dadada;overflow:hidden"></div>
<div class="a" style="left:421px;top:280px;width:892px;height:1px;background:#b6b6b6"></div>
<div class="a" style="left:421px;top:254px;width:176px;height:27px;border:1px solid #b6b6b6;border-bottom:none;border-radius:6px 6px 0 0;background:#ececec"></div>
<svg style="left:424px;top:260px" width="16" height="16" viewBox="0 0 16 16"><rect x="6" y="1.5" width="4" height="3.5" fill="#f4e8a0" stroke="#a08020" stroke-width=".8"/><path d="M8 5v3M3.5 8h9M3.5 8v3M12.5 8v3" stroke="#666" stroke-width=".8"/><rect x="1.5" y="11" width="4" height="3.5" fill="#dde8f8" stroke="#4a6aa8" stroke-width=".8"/><rect x="10.5" y="11" width="4" height="3.5" fill="#c8e8a0" stroke="#4a9a2a" stroke-width=".8"/></svg>
<div class="t" style="left:445px;top:257px;font-size:15.3px;color:#2d2d2d">tfsm class diagram</div>
<svg style="left:579px;top:263px" width="11" height="11" viewBox="0 0 11 11"><path d="M0.7 3L3 0.7 5.5 3.2 8 0.7 10.3 3 7.8 5.5 10.3 8 8 10.3 5.5 7.8 3 10.3 0.7 8 3.2 5.5z" fill="#fff" stroke="#000" stroke-width="1.05" stroke-linejoin="miter"/></svg>
<div class="a" style="left:421px;top:281px;width:892px;height:587px;background:#fff;overflow:hidden"></div>
<div class="a" style="left:421px;top:282px;width:876px;height:35px;background:#fcfcfb;border-top:1px solid #ececec;border-bottom:1px solid #dadada"></div>
<svg style="left:808px;top:292px" width="16" height="16" viewBox="0 0 16 16"><circle cx="6.5" cy="6.5" r="5" fill="#fff" stroke="#666"/><path d="M4 6.5h5M6.5 4v5" stroke="#2a4ab0" stroke-width="1.5"/><path d="M10 10l4.5 4.5" stroke="#8a5a2a" stroke-width="2"/></svg>
<svg style="left:835px;top:292px" width="16" height="16" viewBox="0 0 16 16"><circle cx="6.5" cy="6.5" r="5" fill="#fff" stroke="#666"/><path d="M4 6.5h5" stroke="#2a4ab0" stroke-width="1.5"/><path d="M10 10l4.5 4.5" stroke="#8a5a2a" stroke-width="2"/></svg>
<div class="a" style="left:857px;top:285px;width:193px;height:31px;border:1px solid #d8d8d8;border-radius:4px;background:#fff"></div>
<div class="a" style="left:1020px;top:286px;width:29px;height:29px;border-left:1px solid #d8d8d8;background:#f6f6f6;border-radius:0 4px 4px 0"></div>
<svg style="left:1029px;top:298px" width="11" height="6"><path d="M0 0H11L5.5 5.5z" fill="#888"/></svg>
<svg style="left:1068px;top:292px" width="16" height="16" viewBox="0 0 16 16"><rect x="1" y="4" width="14" height="10" rx="1" fill="#333"/><rect x="3" y="2.5" width="4" height="2" fill="#333"/><circle cx="9" cy="9" r="3.5" fill="#6a8aa8" stroke="#ddd"/><circle cx="9" cy="9" r="1.5" fill="#123"/></svg>
<svg style="left:1095px;top:292px" width="16" height="16" viewBox="0 0 16 16"><rect x="1.5" y="1.5" width="13" height="13" fill="#f4fafe" stroke="#7ab8d8"/><rect x="3.5" y="8.5" width="5" height="3" fill="none" stroke="#7ab8d8"/><rect x="9.5" y="3.5" width="3" height="3" fill="none" stroke="#7ab8d8"/><path d="M4 4v3M4 6h5" stroke="#7ab8d8"/></svg>
<div class="a" style="left:1297px;top:281px;width:16px;height:587px;background:linear-gradient(90deg,#d4d4d4 0 1px,#fff 1px 3px,#dadada 3px 13px,#a8a8a8 13px 14px,#ececec 14px)"></div>
<div class="a" style="left:1299px;top:283px;width:12px;height:25px;background:#fff;border-bottom:1px solid #b8b8b8"></div>
<svg style="left:1301px;top:290px" width="8" height="12"><path d="M6.5 0.5v10L1 5.5z" fill="#fff" stroke="#111" stroke-width="1.2"/></svg>
<div class="a" style="left:421px;top:318px;width:877px;height:550px;overflow:hidden"><svg style="left:-421px;top:-318px" width="1851" height="953"><defs><linearGradient id="y" x1="0" y1="0" x2="1" y2="1"><stop offset="0" stop-color="#fffff6"/><stop offset="1" stop-color="#f6eecb"/></linearGradient><linearGradient id="g" x1="0" y1="0" x2="1" y2="1"><stop offset="0" stop-color="#fdfdfd"/><stop offset="1" stop-color="#e2e2e2"/></linearGradient></defs><path d="M880,391 L880,405" fill="none" stroke="#a8a8a8" stroke-width="1.3"/><path d="M876,398 L880,391 L884,398 Z" fill="#fff" stroke="#888" stroke-width="1"/><path d="M783,405 L1279,405" fill="none" stroke="#8a8a8a" stroke-width="1.5"/><path d="M907,405 L907,558" fill="none" stroke="#a8a8a8" stroke-width="1.3"/><path d="M1105,405 L1105,558" fill="none" stroke="#a8a8a8" stroke-width="1.3"/><path d="M1183,405 L1183,659" fill="none" stroke="#a8a8a8" stroke-width="1.3"/><path d="M1279,405 L1279,828" fill="none" stroke="#a8a8a8" stroke-width="1.3"/><path d="M783,483 L1076,483 L1076,558" fill="none" stroke="#555" stroke-width="1.4"/><path d="M1076,547.5 L1078.6,553 L1076,558.5 L1073.4,553 Z" fill="#222"/><path d="M950,576 L1061,576" fill="none" stroke="#555" stroke-width="1.4"/><path d="M957,573 L951,576 L957,579" fill="none" stroke="#333" stroke-width="1.2"/><path d="M1054,573 L1060,576 L1054,579" fill="none" stroke="#333" stroke-width="1.2"/><path d="M950,619 L1061,619" fill="none" stroke="#555" stroke-width="1.4"/><path d="M957,616 L951,619 L957,622" fill="none" stroke="#333" stroke-width="1.2"/><path d="M1054,616 L1060,619 L1054,622" fill="none" stroke="#333" stroke-width="1.2"/><path d="M783,666 L1072,666 L1072,631" fill="none" stroke="#555" stroke-width="1.4"/><path d="M783,695 L1087,695 L1087,631" fill="none" stroke="#555" stroke-width="1.4"/><path d="M1084,638 L1087,632 L1090,638" fill="none" stroke="#333" stroke-width="1.2"/><path d="M1121,631 L1121,648 L1166,648 L1166,659" fill="none" stroke="#555" stroke-width="1.4"/><path d="M1118,638 L1121,632 L1124,638" fill="none" stroke="#333" stroke-width="1.2"/><path d="M1166,647.5 L1168.6,653 L1166,658.5 L1163.4,653 Z" fill="#222"/><path d="M919,631 L919,719 L1140,719" fill="none" stroke="#555" stroke-width="1.4"/><path d="M916,638 L919,632 L922,638" fill="none" stroke="#333" stroke-width="1.2"/><path d="M1127.5,719 L1133,716.4 L1138.5,719 L1133,721.6 Z" fill="#222"/><path d="M896,631 L896,752 L1155,752 L1155,731" fill="none" stroke="#555" stroke-width="1.4"/><path d="M893,638 L896,632 L899,638" fill="none" stroke="#333" stroke-width="1.2"/><path d="M783,775 L1184,775 L1184,731" fill="none" stroke="#555" stroke-width="1.4"/><path d="M1184,732.5 L1186.6,738 L1184,743.5 L1181.4,738 Z" fill="#222"/><path d="M783,857 L1196,857 L1196,731" fill="none" stroke="#555" stroke-width="1.4"/><path d="M1196,732.5 L1198.6,738 L1196,743.5 L1193.4,738 Z" fill="#222"/><path d="M783,786 L1226,786 L1226,828" fill="none" stroke="#555" stroke-width="1.4"/><path d="M1226,816.5 L1228.6,822 L1226,827.5 L1223.4,822 Z" fill="#222"/><path d="M1268,828 L1268,702 L1228,702" fill="none" stroke="#555" stroke-width="1.4"/><path d="M1235,699 L1229,702 L1235,705" fill="none" stroke="#333" stroke-width="1.2"/><path d="M1268,816.5 L1270.6,822 L1268,827.5 L1265.4,822 Z" fill="#222"/><rect x="838.5" y="320.5" width="87.5" height="71.0" fill="#c8c8c8"/><rect x="836.5" y="318.5" width="87.5" height="71.0" rx="1.5" fill="url(#g)" stroke="#6a6a6a" stroke-width="1"/><path d="M836.5,337.5 H924" stroke="#8a8a8a" stroke-width="1"/><rect x="846" y="322" width="8" height="10" fill="#f8ecb0" stroke="#a08a40"/><rect x="844" y="320" width="4" height="4" fill="#fff" stroke="#444" stroke-width=".8"/><path d="M846,325.5h8M846,328.5h8" stroke="#a08a40"/><rect x="844" y="341.5" width="7" height="4" fill="#f8ecb0" stroke="#a08a40"/><path d="M847,346v4" stroke="#2a4aa8"/><rect x="702.5" y="563.5" width="120.5" height="72.0" fill="#c8c8c8"/><rect x="700.5" y="561.5" width="120.5" height="72.0" rx="1.5" fill="url(#y)" stroke="#6a6a6a" stroke-width="1"/><path d="M700.5,582.5 H821" stroke="#8a8a8a" stroke-width="1"/><rect x="864.5" y="560.5" width="87.5" height="72.0" fill="#c8c8c8"/><rect x="862.5" y="558.5" width="87.5" height="72.0" rx="1.5" fill="url(#y)" stroke="#6a6a6a" stroke-width="1"/><path d="M862.5,578.5 H950" stroke="#8a8a8a" stroke-width="1"/><rect x="892.0" y="562.5" width="7" height="12" fill="#f8ecb0" stroke="#a08a40" stroke-width="1"/><path d="M892.0,566.5 h7 M892.0,570.5 h7" stroke="#a08a40" stroke-width="1"/><circle cx="872.5" cy="585" r="3.6" fill="#5a6aa8" stroke="#2a3470" stroke-width="1"/><circle cx="871.5" cy="584" r="1.3" fill="#b8c4e8"/><circle cx="872.5" cy="597" r="3.6" fill="#5a6aa8" stroke="#2a3470" stroke-width="1"/><circle cx="871.5" cy="596" r="1.3" fill="#b8c4e8"/><rect x="1063.5" y="560.5" width="87.5" height="72.0" fill="#c8c8c8"/><rect x="1061.5" y="558.5" width="87.5" height="72.0" rx="1.5" fill="url(#y)" stroke="#6a6a6a" stroke-width="1"/><path d="M1061.5,578.5 H1149" stroke="#8a8a8a" stroke-width="1"/><rect x="1082.5" y="562.5" width="7" height="12" fill="#f8ecb0" stroke="#a08a40" stroke-width="1"/><path d="M1082.5,566.5 h7 M1082.5,570.5 h7" stroke="#a08a40" stroke-width="1"/><rect x="1067.0" y="582.5" width="9" height="5" fill="#f8ecb0" stroke="#a08a40" stroke-width="1"/><circle cx="1071.5" cy="597" r="3.6" fill="#5a6aa8" stroke="#2a3470" stroke-width="1"/><circle cx="1070.5" cy="596" r="1.3" fill="#b8c4e8"/><rect x="1142.5" y="661.5" width="87.5" height="72.0" fill="#c8c8c8"/><rect x="1140.5" y="659.5" width="87.5" height="72.0" rx="1.5" fill="url(#y)" stroke="#6a6a6a" stroke-width="1"/><path d="M1140.5,678.5 H1228" stroke="#8a8a8a" stroke-width="1"/><rect x="1169.5" y="662.5" width="7" height="12" fill="#f8ecb0" stroke="#a08a40" stroke-width="1"/><path d="M1169.5,666.5 h7 M1169.5,670.5 h7" stroke="#a08a40" stroke-width="1"/><circle cx="1150.5" cy="686" r="3.6" fill="#5a6aa8" stroke="#2a3470" stroke-width="1"/><circle cx="1149.5" cy="685" r="1.3" fill="#b8c4e8"/><rect x="1209.5" y="830.5" width="87.5" height="71.5" fill="#c8c8c8"/><rect x="1207.5" y="828.5" width="87.5" height="71.5" rx="1.5" fill="url(#y)" stroke="#6a6a6a" stroke-width="1"/><path d="M1207.5,846.5 H1295" stroke="#8a8a8a" stroke-width="1"/><rect x="1223.0" y="831.5" width="7" height="12" fill="#f8ecb0" stroke="#a08a40" stroke-width="1"/><path d="M1223.0,835.5 h7 M1223.0,839.5 h7" stroke="#a08a40" stroke-width="1"/><circle cx="1217" cy="854.5" r="3.6" fill="#5a6aa8" stroke="#2a3470" stroke-width="1"/><circle cx="1216" cy="853.5" r="1.3" fill="#b8c4e8"/><text x="782" y="494.3" font-family="Liberation Sans" font-size="9" fill="#222" font-weight='bold' textLength="52" lengthAdjust="spacingAndGlyphs">] ownedGuard</text><text x="969" y="569.3" font-family="Liberation Sans" font-size="9" fill="#222" stroke='#222' stroke-width='0.25' textLength="97" lengthAdjust="spacingAndGlyphs">[0..*] outgoingTransitions</text><text x="956" y="592.8" font-family="Liberation Sans" font-size="9" fill="#222" stroke='#222' stroke-width='0.25' textLength="47" lengthAdjust="spacingAndGlyphs">[1..1] source</text><text x="968" y="614.8" font-family="Liberation Sans" font-size="9" fill="#222" stroke='#222' stroke-width='0.25' textLength="97" lengthAdjust="spacingAndGlyphs">[0..*] incomingTransitions</text><text x="956" y="630.8" font-family="Liberation Sans" font-size="9" fill="#222" stroke='#222' stroke-width='0.25' textLength="43.5" lengthAdjust="spacingAndGlyphs">[1..1] target</text><text x="783" y="677.3" font-family="Liberation Sans" font-size="9" fill="#222" stroke='#222' stroke-width='0.25' textLength="30.5" lengthAdjust="spacingAndGlyphs">edEvents</text><text x="783" y="691.3" font-family="Liberation Sans" font-size="9" fill="#222" stroke='#222' stroke-width='0.25' textLength="39" lengthAdjust="spacingAndGlyphs">Transitions</text><text x="1108" y="644.8" font-family="Liberation Sans" font-size="9" fill="#222" stroke='#222' stroke-width='0.25' textLength="87" lengthAdjust="spacingAndGlyphs">[0..*] ownedTransitions</text><text x="1012" y="730.8" font-family="Liberation Sans" font-size="9" fill="#222" stroke='#222' stroke-width='0.25' textLength="134" lengthAdjust="spacingAndGlyphs">[0..*] ownedStates [1..1] owningFSM</text><text x="1030.5" y="749.8" font-family="Liberation Sans" font-size="9" fill="#222" font-weight='bold' textLength="65.0" lengthAdjust="spacingAndGlyphs">[1..1] initialState</text><text x="864" y="797.8" font-family="Liberation Sans" font-size="9" fill="#222" stroke='#222' stroke-width='0.25' textLength="68" lengthAdjust="spacingAndGlyphs">[0..*] globalEvents</text><text x="1234" y="698.8" font-family="Liberation Sans" font-size="9" fill="#222" stroke='#222' stroke-width='0.25' textLength="41" lengthAdjust="spacingAndGlyphs">[0..*] tfsms</text><text x="860" y="330.8" font-family="Liberation Sans" font-size="9" fill="#222" stroke='#222' stroke-width='0.25' font-style='italic' textLength="53" lengthAdjust="spacingAndGlyphs">NamedElement</text><text x="854" y="347.3" font-family="Liberation Sans" font-size="9" fill="#222" font-weight='bold' textLength="56" lengthAdjust="spacingAndGlyphs">name : EString</text><text x="749" y="574.8" font-family="Liberation Sans" font-size="9" fill="#222" stroke='#222' stroke-width='0.25' textLength="63" lengthAdjust="spacingAndGlyphs">EvaluateGuard</text><text x="784" y="591.3" font-family="Liberation Sans" font-size="9" fill="#222" stroke='#222' stroke-width='0.25' textLength="28" lengthAdjust="spacingAndGlyphs">EString</text><text x="781" y="603.3" font-family="Liberation Sans" font-size="9" fill="#222" stroke='#222' stroke-width='0.25' textLength="38" lengthAdjust="spacingAndGlyphs">: EBoolean</text><text x="904" y="571.8" font-family="Liberation Sans" font-size="9" fill="#222" stroke='#222' stroke-width='0.25' textLength="18" lengthAdjust="spacingAndGlyphs">State</text><text x="880" y="588.8" font-family="Liberation Sans" font-size="9" fill="#222" stroke='#222' stroke-width='0.25' textLength="36.5" lengthAdjust="spacingAndGlyphs">onEnter()</text><text x="880" y="600.8" font-family="Liberation Sans" font-size="9" fill="#222" stroke='#222' stroke-width='0.25' textLength="36.5" lengthAdjust="spacingAndGlyphs">onLeave()</text><text x="1094.5" y="571.8" font-family="Liberation Sans" font-size="9" fill="#222" stroke='#222' stroke-width='0.25' textLength="36.5" lengthAdjust="spacingAndGlyphs">Transition</text><text x="1079" y="588.8" font-family="Liberation Sans" font-size="9" fill="#222" stroke='#222' stroke-width='0.25' textLength="55.5" lengthAdjust="spacingAndGlyphs">action : EString</text><text x="1079" y="600.8" font-family="Liberation Sans" font-size="9" fill="#222" stroke='#222' stroke-width='0.25' textLength="18" lengthAdjust="spacingAndGlyphs">fire()</text><text x="1181" y="671.8" font-family="Liberation Sans" font-size="9" fill="#222" stroke='#222' stroke-width='0.25' textLength="20" lengthAdjust="spacingAndGlyphs">TFSM</text><text x="1158" y="689.8" font-family="Liberation Sans" font-size="9" fill="#222" stroke='#222' stroke-width='0.25' textLength="36" lengthAdjust="spacingAndGlyphs">initialize()</text><text x="1234" y="840.8" font-family="Liberation Sans" font-size="9" fill="#222" stroke='#222' stroke-width='0.25' textLength="48.5" lengthAdjust="spacingAndGlyphs">TimedSystem</text><text x="1225" y="858.3" font-family="Liberation Sans" font-size="9" fill="#222" stroke='#222' stroke-width='0.25' textLength="37" lengthAdjust="spacingAndGlyphs">initialize()</text></svg></div>
<div class="a" style="left:1318px;top:110px;width:528px;height:760px;border:1px solid #b6b6b6;border-radius:7px 7px 7px 7px;background:#dadada;overflow:hidden"></div>
<div class="a" style="left:1319px;top:136px;width:526px;height:1px;background:#b6b6b6"></div>
<div class="a" style="left:1318px;top:110px;width:125px;height:27px;border:1px solid #b6b6b6;border-bottom:none;border-radius:6px 6px 0 0;background:#ececec"></div>
<svg style="left:1324px;top:116px" width="16" height="16" viewBox="0 0 16 16"><path d="M4.5 1.5h6l3 3v10h-9z" fill="#eef4fa" stroke="#a08a60"/><path d="M6 5l3 3-3 3M9 5l3 3-3 3" stroke="#2a6ad0" fill="none" stroke-width="1.2"/><path d="M0.5 15.5l3-6 3 6z" fill="#f6c640" stroke="#906a10" stroke-width=".7"/></svg>
<div class="t" style="left:1343px;top:112px;font-size:15.3px;color:#2d2d2d">tfsm.xtend</div>
<svg style="left:1425px;top:119px" width="11" height="11" viewBox="0 0 11 11"><path d="M0.7 3L3 0.7 5.5 3.2 8 0.7 10.3 3 7.8 5.5 10.3 8 8 10.3 5.5 7.8 3 10.3 0.7 8 3.2 5.5z" fill="#fff" stroke="#000" stroke-width="1.05" stroke-linejoin="miter"/></svg>
<div class="a" style="left:1319px;top:137px;width:526px;height:732px;background:#fff;border-radius:0 0 6px 6px;overflow:hidden"><div class="a" style="left:1px;top:0;width:14px;height:732px;background:#f4f4f4"></div><div class="a" style="left:31px;top:0;width:1px;height:732px;background:#f0f0f0"></div><div class="a" style="left:34px;top:172px;width:476px;height:17px;background:#e8f2fe"></div><div class="a" style="left:510px;top:0;width:16px;height:732px;background:#f8f8f8;border-left:1px solid #eee"></div></div>
<div class="a" style="left:1353px;top:137px;width:476px;height:732px;overflow:hidden">
<div class="m" style="left:0;top:3px;font-size:13.32px;line-height:17px;color:#1e1e1e"><b style="color:#7f0055">package</b> org.eclipse.gemoc.example.moccml.tfsm.k3dsa.aspect</div>
<div class="m" style="left:0;top:37px;font-size:13.32px;line-height:17px;color:#1e1e1e"><b style="color:#7f0055">import</b> fr.inria.diverse.k3.al.annotationprocessor.Aspect</div>
<div class="m" style="left:0;top:71px;font-size:13.32px;line-height:17px;color:#1e1e1e"><span style="color:#c0602a">@Aspect</span>(className=TFSM)</div>
<div class="m" style="left:0;top:88px;font-size:13.32px;line-height:17px;color:#1e1e1e"><b style="color:#7f0055">class</b> TFSMAspect <b style="color:#7f0055">extends</b> NamedElementAspect {</div>
<div class="m" style="left:0;top:122px;font-size:13.32px;line-height:17px;color:#1e1e1e">    <b style="color:#7f0055">public</b> State <span style="color:#0000c0">currentState</span>;</div>
<div class="m" style="left:0;top:156px;font-size:13.32px;line-height:17px;color:#1e1e1e">    <b style="color:#7f0055">def</b> String initialize() {</div>
<div class="m" style="left:0;top:173px;font-size:13.32px;line-height:17px;color:#1e1e1e">        <b style="color:#7f0055">if</b> (_self.<i style="color:#b35a1e">currentState</i> === <b style="color:#7f0055">null</b>) {</div>
<div class="m" style="left:0;top:207px;font-size:13.32px;line-height:17px;color:#1e1e1e">            _self.<i style="color:#b35a1e">currentState</i> = _self.initialState;</div>
<div class="m" style="left:0;top:224px;font-size:13.32px;line-height:17px;color:#1e1e1e">        }</div>
<div class="m" style="left:0;top:241px;font-size:13.32px;line-height:17px;color:#1e1e1e">        <i>println</i>(<span style="color:#2a00ff">"["</span> + _self.getClass().getSimpleName() + <span style="color:#2a00ff">":"</span> + _self.name)</div>
<div class="m" style="left:0;top:258px;font-size:13.32px;line-height:17px;color:#1e1e1e">    }</div>
<div class="m" style="left:0;top:275px;font-size:13.32px;line-height:17px;color:#1e1e1e">    <b style="color:#7f0055">def</b> <b style="color:#7f0055">void</b> changeCurrentState(State newState)</div>
<div class="m" style="left:0;top:292px;font-size:13.32px;line-height:17px;color:#1e1e1e">    {</div>
<div class="m" style="left:0;top:309px;font-size:13.32px;line-height:17px;color:#1e1e1e">        _self.<i style="color:#b35a1e">currentState</i> = newState</div>
<div class="m" style="left:0;top:326px;font-size:13.32px;line-height:17px;color:#1e1e1e">    }</div>
<div class="m" style="left:0;top:343px;font-size:13.32px;line-height:17px;color:#1e1e1e">}</div>
<div class="m" style="left:0;top:377px;font-size:13.32px;line-height:17px;color:#1e1e1e"><span style="color:#c0602a">@Aspect</span>(className=State)</div>
<div class="m" style="left:0;top:394px;font-size:13.32px;line-height:17px;color:#1e1e1e"><b style="color:#7f0055">class</b> StateAspect <b style="color:#7f0055">extends</b> NamedElementAspect {</div>
<div class="m" style="left:0;top:411px;font-size:13.32px;line-height:17px;color:#1e1e1e">    <b style="color:#7f0055">def</b> String onEnter() {</div>
<div class="m" style="left:0;top:428px;font-size:13.32px;line-height:17px;color:#1e1e1e">        _self.owningFSM.<i style="color:#b35a1e">currentState</i> = _self;</div>
<div class="m" style="left:0;top:445px;font-size:13.32px;line-height:17px;color:#1e1e1e">        <i>println</i>(<span style="color:#2a00ff">"["</span> + _self.getClass().getSimpleName() + <span style="color:#2a00ff">":"</span> + _self.name)</div>
<div class="m" style="left:0;top:462px;font-size:13.32px;line-height:17px;color:#1e1e1e">    }</div>
<div class="m" style="left:0;top:479px;font-size:13.32px;line-height:17px;color:#1e1e1e">    <b style="color:#7f0055">def</b> String onLeave() {</div>
<div class="m" style="left:0;top:496px;font-size:13.32px;line-height:17px;color:#1e1e1e">        <i>println</i>(<span style="color:#2a00ff">"["</span> + _self.getClass().getSimpleName() + <span style="color:#2a00ff">":"</span> + _self.name)</div>
<div class="m" style="left:0;top:513px;font-size:13.32px;line-height:17px;color:#1e1e1e">    }</div>
<div class="m" style="left:0;top:530px;font-size:13.32px;line-height:17px;color:#1e1e1e">}</div>
<div class="m" style="left:0;top:564px;font-size:13.32px;line-height:17px;color:#1e1e1e"><span style="color:#c0602a">@Aspect</span>(className=Transition)</div>
<div class="m" style="left:0;top:581px;font-size:13.32px;line-height:17px;color:#1e1e1e"><b style="color:#7f0055">class</b> TransitionAspect <b style="color:#7f0055">extends</b> NamedElementAspect {</div>
<div class="m" style="left:0;top:598px;font-size:13.32px;line-height:17px;color:#1e1e1e">    <b style="color:#7f0055">def</b> String fire() {</div>
<div class="m" style="left:0;top:615px;font-size:13.32px;line-height:17px;color:#1e1e1e">        <b style="color:#7f0055">if</b>(_self.action !== <b style="color:#7f0055">null</b> &amp;&amp; !_self.action.empty){</div>
<div class="m" style="left:0;top:632px;font-size:13.32px;line-height:17px;color:#1e1e1e">            GroovyRunner.<i>executeScript</i>(_self.action, _self);</div>
<div class="m" style="left:0;top:649px;font-size:13.32px;line-height:17px;color:#1e1e1e">        }</div>
<div class="m" style="left:0;top:666px;font-size:13.32px;line-height:17px;color:#1e1e1e">        _self.source.owningFSM.<i style="color:#b35a1e">currentState</i> = <b style="color:#7f0055">null</b></div>
<div class="m" style="left:0;top:683px;font-size:13.32px;line-height:17px;color:#1e1e1e">        <i>println</i>(<span style="color:#2a00ff">"["</span> + _self.getClass().getSimpleName() + <span style="color:#2a00ff">":"</span> + _self.name)</div>
<div class="m" style="left:0;top:700px;font-size:13.32px;line-height:17px;color:#1e1e1e">    }</div>
<div class="m" style="left:0;top:717px;font-size:13.32px;line-height:17px;color:#1e1e1e">}</div>
</div>
<div class="a" style="left:1801px;top:173px;width:10px;height:16px;border:1px solid #999;background:#fff"></div>
<div class="a" style="left:1803px;top:185px;width:6px;height:1px;border-top:1px dotted #666"></div>
<svg style="left:1340px;top:176px" width="10" height="10" viewBox="0 0 9 9"><circle cx="4.5" cy="4.5" r="4" fill="#eef2f6" stroke="#8a9aaa" stroke-width=".8"/><path d="M2 4.5h5" stroke="#3a4a5a"/><path d="M4 2v5" stroke="#6a7a8a"/></svg>
<svg style="left:1340px;top:210px" width="10" height="10" viewBox="0 0 9 9"><circle cx="4.5" cy="4.5" r="4" fill="#eef2f6" stroke="#8a9aaa" stroke-width=".8"/><path d="M2 4.5h5" stroke="#3a4a5a"/></svg>
<svg style="left:1340px;top:295px" width="10" height="10" viewBox="0 0 9 9"><circle cx="4.5" cy="4.5" r="4" fill="#eef2f6" stroke="#8a9aaa" stroke-width=".8"/><path d="M2 4.5h5" stroke="#3a4a5a"/></svg>
<svg style="left:1340px;top:414px" width="10" height="10" viewBox="0 0 9 9"><circle cx="4.5" cy="4.5" r="4" fill="#eef2f6" stroke="#8a9aaa" stroke-width=".8"/><path d="M2 4.5h5" stroke="#3a4a5a"/></svg>
<svg style="left:1340px;top:516px" width="10" height="10" viewBox="0 0 9 9"><circle cx="4.5" cy="4.5" r="4" fill="#eef2f6" stroke="#8a9aaa" stroke-width=".8"/><path d="M2 4.5h5" stroke="#3a4a5a"/></svg>
<svg style="left:1340px;top:550px" width="10" height="10" viewBox="0 0 9 9"><circle cx="4.5" cy="4.5" r="4" fill="#eef2f6" stroke="#8a9aaa" stroke-width=".8"/><path d="M2 4.5h5" stroke="#3a4a5a"/></svg>
<svg style="left:1340px;top:618px" width="10" height="10" viewBox="0 0 9 9"><circle cx="4.5" cy="4.5" r="4" fill="#eef2f6" stroke="#8a9aaa" stroke-width=".8"/><path d="M2 4.5h5" stroke="#3a4a5a"/></svg>
<svg style="left:1340px;top:703px" width="10" height="10" viewBox="0 0 9 9"><circle cx="4.5" cy="4.5" r="4" fill="#eef2f6" stroke="#8a9aaa" stroke-width=".8"/><path d="M2 4.5h5" stroke="#3a4a5a"/></svg>
<svg style="left:1340px;top:737px" width="10" height="10" viewBox="0 0 9 9"><circle cx="4.5" cy="4.5" r="4" fill="#eef2f6" stroke="#8a9aaa" stroke-width=".8"/><path d="M2 4.5h5" stroke="#3a4a5a"/></svg>
<svg style="left:1319px;top:173px" width="16" height="16" viewBox="0 0 16 16"><path d="M8 2l6 11H2z" fill="#eee" stroke="#888"/><path d="M8 6v4M8 11.5v1" stroke="#666" stroke-width="1.3"/></svg>
<div class="a" style="left:1831px;top:149px;width:10px;height:5px;background:#fae8a0;border:1px solid #e8c040"></div>
<div class="a" style="left:1831px;top:539px;width:10px;height:5px;background:#fae8a0;border:1px solid #e8c040"></div>
<div class="a" style="left:1831px;top:609px;width:10px;height:5px;background:#fae8a0;border:1px solid #e8c040"></div>
<div class="a" style="left:1831px;top:674px;width:10px;height:5px;background:#fae8a0;border:1px solid #e8c040"></div>
<div class="a" style="left:1831px;top:738px;width:10px;height:5px;background:#fae8a0;border:1px solid #e8c040"></div>
<div class="a" style="left:417px;top:878px;width:1431px;height:80px;border:1px solid #b6b6b6;border-radius:7px 7px 0 0;background:#dadada;overflow:hidden"><div class="a" style="left:0;top:33px;width:1431px;height:1px;background:#b6b6b6"></div><div class="a" style="left:0;top:34px;width:1431px;height:33px;background:#e8e8e8"></div><div class="a" style="left:0;top:67px;width:1431px;height:20px;background:#fff;border-top:1px solid #d8d8d8"></div></div>
<div class="t" style="left:0;width:1317px;text-align:right;top:918px;font-size:16px;font-weight:bold;color:#4c4c4c;letter-spacing:1px">org/eclipse/gemoc/example/moccml/tfsm</div>
<svg style="left:1716px;top:888px" width="16" height="16" viewBox="0 0 16 16"><defs><linearGradient id="wg" x1="0" y1="0" x2="0" y2="1"><stop offset="0" stop-color="#c8e4f8"/><stop offset="1" stop-color="#fff"/></linearGradient></defs><rect x="1.5" y="2.5" width="13" height="11" fill="url(#wg)" stroke="#a89a70"/><rect x="2" y="3" width="12" height="1.5" fill="#5a9ad8"/><path d="M9 10l3-4" stroke="#333" stroke-width=".8"/><path d="M10.5 5.5l3.5-4.5 1.8 1.5-3.5 4.5z" fill="#3aa04a" stroke="#1e7a2e" stroke-width=".6"/></svg>
<svg style="left:1759px;top:889px" width="12" height="8"><path d="M1.2 1.2h9.6L6 6.2z" fill="#fff" stroke="#111" stroke-width="1.3"/></svg>
<div class="a" style="left:1791px;top:890px;width:11px;height:5px;border:1.3px solid #000;background:#fff;border-radius:1px"></div>
<div class="a" style="left:1818px;top:890px;width:11px;height:10px;border:1.3px solid #000;border-top-width:2.2px;background:#fff;border-radius:1px"></div>
<div class="a" style="left:381px;top:280px;width:402px;height:690px;background:#fff;border:1px solid #c4c4c4;border-radius:4px;box-shadow:1px 1px 2px rgba(0,0,0,.08)"></div>
<div class="t" style="left:413px;top:289.5px;font-size:15.3px;color:#3c3c3c;letter-spacing:-0.2px">New</div>
<svg style="left:765px;top:296.5px" width="6" height="10"><path d="M0 0V10L5.5 5z" fill="#333"/></svg>
<div class="a" style="left:382px;top:315px;width:400px;height:1px;background:#ececec"></div>
<div class="t" style="left:413px;top:317.5px;font-size:15.3px;color:#3c3c3c;letter-spacing:-0.2px">Show In</div>
<div class="t" style="left:0;width:758px;text-align:right;top:317.5px;font-size:15.3px;color:#8c8c8c">Maj+Alt+W</div>
<svg style="left:765px;top:324.5px" width="6" height="10"><path d="M0 0V10L5.5 5z" fill="#333"/></svg>
<div class="t" style="left:413px;top:344.5px;font-size:15.3px;color:#3c3c3c;letter-spacing:-0.2px">Open</div>
<div class="t" style="left:0;width:774px;text-align:right;top:344.5px;font-size:15.3px;color:#8c8c8c">F3</div>
<div class="t" style="left:413px;top:371.5px;font-size:15.3px;color:#3c3c3c;letter-spacing:-0.2px">Open With</div>
<svg style="left:765px;top:378.5px" width="6" height="10"><path d="M0 0V10L5.5 5z" fill="#333"/></svg>
<div class="a" style="left:382px;top:397px;width:400px;height:1px;background:#ececec"></div>
<svg style="left:413px;top:403.5px" width="16" height="16" viewBox="0 0 16 16"><path d="M1.5 1.5h6v11h-6z" fill="#f6f8fb" stroke="#8a9aaa"/><path d="M4.5 2.5h7l3 3v10h-10z" fill="#fafbfd" stroke="#8a9aaa"/><path d="M6 6h6M6 8h7M6 10h7M6 12h7" stroke="#5a7ab0" stroke-width=".8"/></svg>
<div class="t" style="left:435px;top:399.5px;font-size:15.3px;color:#3c3c3c;letter-spacing:-0.2px">Copy</div>
<div class="t" style="left:0;width:774px;text-align:right;top:399.5px;font-size:15.3px;color:#8c8c8c">Ctrl+C</div>
<svg style="left:413px;top:430.5px" width="16" height="16" viewBox="0 0 16 16"><path d="M1.5 2.5h8v8h-8z" fill="#f6f8fb" stroke="#8a9aaa"/><path d="M3 5h5M3 7h5" stroke="#5a7ab0" stroke-width=".8"/><path d="M5.5 6.5h9v8h-9z" fill="#fafbfd" stroke="#8a9aaa"/><path d="M7 9h6M7 11h6M7 13h6" stroke="#5a7ab0" stroke-width=".8"/></svg>
<div class="t" style="left:435px;top:426.5px;font-size:15.3px;color:#3c3c3c;letter-spacing:-0.2px">Copy Qualified Name</div>
<svg style="left:413px;top:457.5px" width="16" height="16" viewBox="0 0 16 16"><rect x="1.5" y="2.5" width="10" height="12" rx="1" fill="#e8c890" stroke="#a07a40"/><rect x="4" y="1" width="5" height="3" fill="#ddd" stroke="#888" stroke-width=".7"/><path d="M6.5 6.5h7v8h-7z" fill="#fafafa" stroke="#8a9aaa"/></svg>
<div class="t" style="left:435px;top:453.5px;font-size:15.3px;color:#3c3c3c;letter-spacing:-0.2px">Paste</div>
<div class="t" style="left:0;width:774px;text-align:right;top:453.5px;font-size:15.3px;color:#8c8c8c">Ctrl+V</div>
<svg style="left:413px;top:484.5px" width="16" height="16" viewBox="0 0 16 16"><path d="M3.5 3.5l9 9M12.5 3.5l-9 9" stroke="#e03838" stroke-width="3.2" stroke-linecap="round"/></svg>
<div class="t" style="left:435px;top:480.5px;font-size:15.3px;color:#3c3c3c;letter-spacing:-0.2px">Delete</div>
<div class="t" style="left:413px;top:507.5px;font-size:15.3px;color:#3c3c3c;letter-spacing:-0.2px">Build Path</div>
<svg style="left:765px;top:514.5px" width="6" height="10"><path d="M0 0V10L5.5 5z" fill="#333"/></svg>
<div class="t" style="left:413px;top:534.5px;font-size:15.3px;color:#3c3c3c;letter-spacing:-0.2px">Move...</div>
<div class="t" style="left:413px;top:561.5px;font-size:15.3px;color:#3c3c3c;letter-spacing:-0.2px">Rename...</div>
<div class="t" style="left:0;width:774px;text-align:right;top:561.5px;font-size:15.3px;color:#8c8c8c">F2</div>
<div class="a" style="left:382px;top:587px;width:400px;height:1px;background:#ececec"></div>
<svg style="left:413px;top:593.5px" width="16" height="16" viewBox="0 0 16 16"><path d="M1.5 8v6.5h13V8M1.5 8h2v4h9V8h2" fill="#dfe8f4" stroke="#7a9ac8"/><path d="M3.5 2.5l6 6M9.5 5v3.5H6" stroke="#3a6ab0" fill="none" stroke-width="1"/></svg>
<div class="t" style="left:435px;top:589.5px;font-size:15.3px;color:#3c3c3c;letter-spacing:-0.2px">Import...</div>
<svg style="left:413px;top:620.5px" width="16" height="16" viewBox="0 0 16 16"><path d="M1.5 8v6.5h13V8M1.5 8h2v4h9V8h2" fill="#dfe8f4" stroke="#7a9ac8"/><path d="M6 9l7-7M9.5 2h3.5v3.5" stroke="#3a6ab0" fill="none" stroke-width="1"/></svg>
<div class="t" style="left:435px;top:616.5px;font-size:15.3px;color:#3c3c3c;letter-spacing:-0.2px">Export...</div>
<div class="a" style="left:382px;top:642px;width:400px;height:1px;background:#ececec"></div>
<svg style="left:413px;top:648.5px" width="16" height="16" viewBox="0 0 16 16"><path d="M4.5 1.5h6l3 3v11h-9z" fill="#eef2f8" stroke="#a8a080"/><path d="M2.5 7.5a3.5 3.5 0 0 1 6-2.5M9 9.5a3.5 3.5 0 0 1-6 2" stroke="#e0a020" fill="none" stroke-width="1.5"/><path d="M7 3.5l2 1.5-2 1.5zM4.5 10l-2 1.5 2 1.5z" fill="#e0a020"/></svg>
<div class="t" style="left:435px;top:644.5px;font-size:15.3px;color:#3c3c3c;letter-spacing:-0.2px">Refresh</div>
<div class="t" style="left:0;width:774px;text-align:right;top:644.5px;font-size:15.3px;color:#8c8c8c">F5</div>
<div class="a" style="left:382px;top:670px;width:400px;height:1px;background:#ececec"></div>
<div class="t" style="left:413px;top:672.5px;font-size:15.3px;color:#3c3c3c;letter-spacing:-0.2px">Validate</div>
<svg style="left:413px;top:703.5px" width="16" height="16" viewBox="0 0 16 16"><defs><radialGradient id="rg2" cx=".4" cy=".35" r=".7"><stop offset="0" stop-color="#7cd07c"/><stop offset="1" stop-color="#1e8a2e"/></radialGradient></defs><circle cx="8" cy="8" r="7" fill="url(#rg2)" stroke="#1e7a2e" stroke-width=".8"/><path d="M6 4.2v7.6l5.8-3.8z" fill="#fff"/></svg>
<div class="t" style="left:435px;top:699.5px;font-size:15.3px;color:#3c3c3c;letter-spacing:-0.2px">Run As</div>
<svg style="left:765px;top:706.5px" width="6" height="10"><path d="M0 0V10L5.5 5z" fill="#333"/></svg>
<svg style="left:413px;top:730.5px" width="16" height="16" viewBox="0 0 16 16"><g transform="rotate(-40 8 8)"><ellipse cx="8" cy="9" rx="3.2" ry="4.6" fill="#9ccab0" stroke="#2e6a6a"/><path d="M8 5.5v7" stroke="#cfe8d8" stroke-width=".8"/><circle cx="8" cy="3.8" r="1.6" fill="#2e6a6a"/><path d="M3 5.5l2 2M13 5.5l-2 2M2.5 9h2.3M13.5 9h-2.3M3 13l2-1.5M13 13l-2-1.5M6.5 1.5l.8 1.5M9.5 1.5l-.8 1.5" stroke="#2e5a6a" stroke-width="1.1"/></g></svg>
<div class="t" style="left:435px;top:726.5px;font-size:15.3px;color:#3c3c3c;letter-spacing:-0.2px">Debug As</div>
<svg style="left:765px;top:733.5px" width="6" height="10"><path d="M0 0V10L5.5 5z" fill="#333"/></svg>
<div class="t" style="left:413px;top:753.5px;font-size:15.3px;color:#3c3c3c;letter-spacing:-0.2px">Profile As</div>
<svg style="left:765px;top:760.5px" width="6" height="10"><path d="M0 0V10L5.5 5z" fill="#333"/></svg>
<div class="t" style="left:413px;top:780.5px;font-size:15.3px;color:#3c3c3c;letter-spacing:-0.2px">Acceleo</div>
<svg style="left:765px;top:787.5px" width="6" height="10"><path d="M0 0V10L5.5 5z" fill="#333"/></svg>
<div class="t" style="left:413px;top:807.5px;font-size:15.3px;color:#3c3c3c;letter-spacing:-0.2px">ECL</div>
<svg style="left:765px;top:814.5px" width="6" height="10"><path d="M0 0V10L5.5 5z" fill="#333"/></svg>
<div class="a" style="left:382px;top:833px;width:400px;height:1px;background:#ececec"></div>
<svg style="left:413px;top:839.5px" width="16" height="16" viewBox="0 0 16 16"><path d="M1.5 15.5h7.5v-2.5H5V6.5H1.5z" fill="#23234f"/><rect x="1.5" y="6.5" width="3.5" height="6.5" fill="#666"/><circle cx="10" cy="3.5" r="2.3" fill="#fff" stroke="#23234f" stroke-width=".9"/><circle cx="13" cy="5" r="2.2" fill="#fff" stroke="#f09030" stroke-width="1"/><circle cx="11" cy="9" r="2.2" fill="#fff" stroke="#f09030" stroke-width="1"/></svg>
<div class="t" style="left:435px;top:835.5px;font-size:15.3px;color:#3c3c3c;letter-spacing:-0.2px">GEMOC Language</div>
<svg style="left:765px;top:842.5px" width="6" height="10"><path d="M0 0V10L5.5 5z" fill="#333"/></svg>
<div class="a" style="left:382px;top:861.0px;width:400px;height:27px;background:#dedede"></div>
<svg style="left:413px;top:866.5px" width="16" height="16" viewBox="0 0 16 16"><path d="M1.5 15.5h7.5v-2.5H5V6.5H1.5z" fill="#23234f"/><rect x="1.5" y="6.5" width="3.5" height="6.5" fill="#666"/><circle cx="10" cy="3.5" r="2.3" fill="#fff" stroke="#23234f" stroke-width=".9"/><circle cx="13" cy="5" r="2.2" fill="#fff" stroke="#f09030" stroke-width="1"/><circle cx="11" cy="9" r="2.2" fill="#fff" stroke="#f09030" stroke-width="1"/></svg>
<div class="t" style="left:435px;top:862.5px;font-size:15.3px;color:#3c3c3c;letter-spacing:-0.2px">GEMOC Moccml xDSML</div>
<svg style="left:765px;top:869.5px" width="6" height="10"><path d="M0 0V10L5.5 5z" fill="#333"/></svg>
<svg style="left:413px;top:893.5px" width="16" height="16" viewBox="0 0 16 16"><path d="M4.5 15.5c-.5-2-3.5-3-3.5-6.5C1 4 4 1.5 8 1.5s7 2.5 6.5 6.5c-.3 2-1.5 2.5-1.5 4l-2 2.5z" fill="#fbfbfd" stroke="#9a9ab8" stroke-width=".8"/><path d="M4 6.5h3.5v5H4z" fill="#f08020"/><path d="M7.5 6.5H11v5H7.5z" fill="#222"/><path d="M4 6.5l3.5 2.5 3.5-2.5" stroke="#fff" stroke-width=".8" fill="none"/></svg>
<div class="t" style="left:435px;top:889.5px;font-size:15.3px;color:#3c3c3c;letter-spacing:-0.2px">GEMOC Modeling advanced tools</div>
<svg style="left:765px;top:896.5px" width="6" height="10"><path d="M0 0V10L5.5 5z" fill="#333"/></svg>
<div class="a" style="left:382px;top:915px;width:400px;height:1px;background:#ececec"></div>
<div class="t" style="left:413px;top:917.5px;font-size:15.3px;color:#3c3c3c;letter-spacing:-0.2px">Team</div>
<svg style="left:765px;top:924.5px" width="6" height="10"><path d="M0 0V10L5.5 5z" fill="#333"/></svg>
<div class="t" style="left:413px;top:944.5px;font-size:15.3px;color:#3c3c3c;letter-spacing:-0.2px">Compare With</div>
<svg style="left:765px;top:951.5px" width="6" height="10"><path d="M0 0V10L5.5 5z" fill="#333"/></svg>
<div class="a" style="left:780px;top:852px;width:365px;height:99px;background:#fff;border:1px solid #c4c4c4;border-radius:4px;box-shadow:1px 1px 2px rgba(0,0,0,.08)"></div>
<svg style="left:812px;top:867.5px" width="14" height="14" viewBox="0 0 14 14"><path d="M5 1h4v4h4v4H9v4H5V9H1V5h4z" fill="#fff" stroke="#111" stroke-width="1.3"/></svg>
<div class="t" style="left:833px;top:862.5px;font-size:15.3px;color:#3c3c3c;letter-spacing:-0.2px">Create DSA Project for language</div>
<svg style="left:812px;top:894.5px" width="14" height="14" viewBox="0 0 14 14"><path d="M5 1h4v4h4v4H9v4H5V9H1V5h4z" fill="#fff" stroke="#111" stroke-width="1.3"/></svg>
<div class="t" style="left:833px;top:889.5px;font-size:15.3px;color:#3c3c3c;letter-spacing:-0.2px">Create DSE Project for language</div>
<svg style="left:812px;top:921.5px" width="14" height="14" viewBox="0 0 14 14"><path d="M5 1h4v4h4v4H9v4H5V9H1V5h4z" fill="#fff" stroke="#111" stroke-width="1.3"/></svg>
<div class="t" style="left:833px;top:916.5px;font-size:15.3px;color:#3c3c3c;letter-spacing:-0.2px">Create MOCC Library Project for language</div>
<svg style="left:844px;top:8px" width="13" height="20" viewBox="0 0 13 20"><path d="M0.7 0.7V16.2L4.3 12.8 6.8 18.6 9.3 17.6 6.9 11.9H11.8Z" fill="#2b2929" stroke="#fff" stroke-width="1.2" stroke-linejoin="round"/></svg>
</body></html>
